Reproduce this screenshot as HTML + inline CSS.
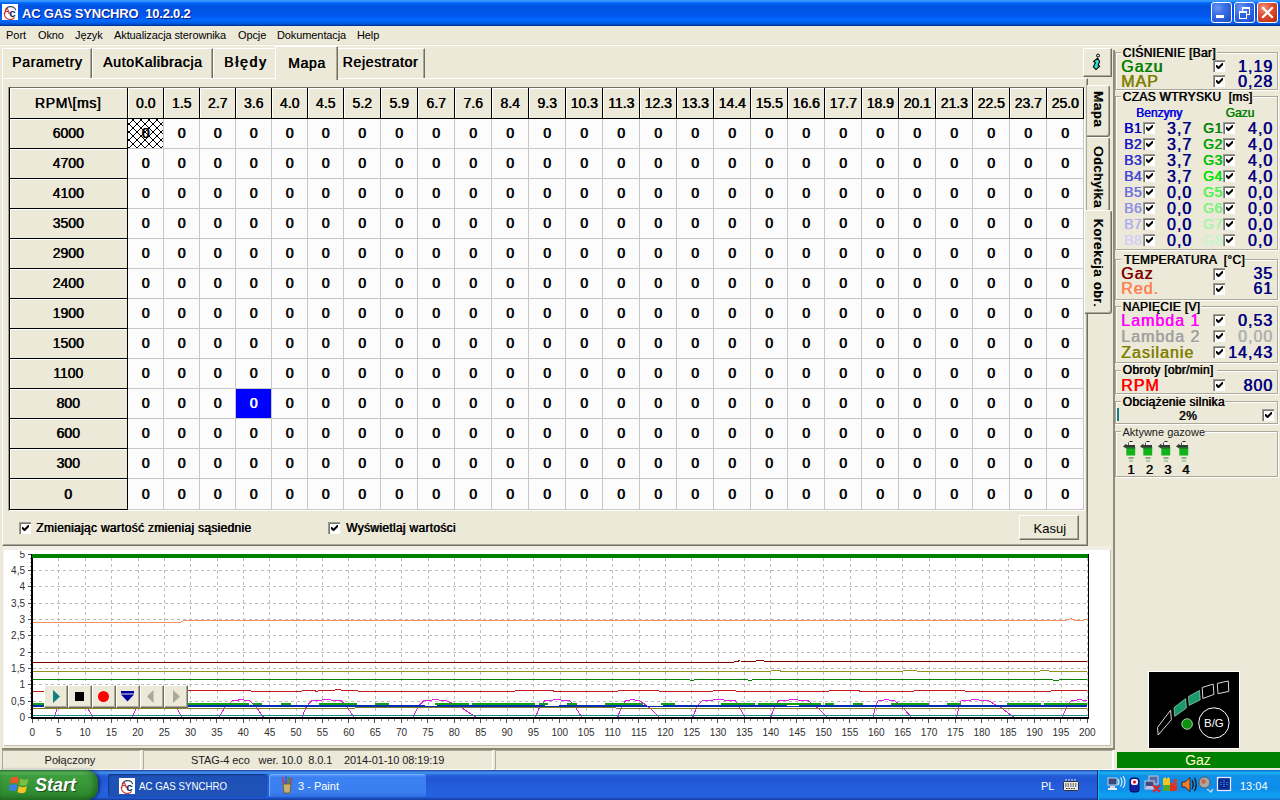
<!DOCTYPE html>
<html lang="pl"><head><meta charset="utf-8"><title>AC GAS SYNCHRO 10.2.0.2</title>
<style>
html,body{margin:0;padding:0;}
body{width:1280px;height:800px;overflow:hidden;background:#ece9d8;position:relative;font-family:"Liberation Sans",sans-serif;font-size:11px;}
.t{position:absolute;white-space:pre;margin:0;padding:0;}
.abs{position:absolute;}
.cb{position:absolute;width:11px;height:11px;background:#fff;border-top:1px solid #9a9a96;border-left:1px solid #9a9a96;box-shadow:inset 1px 1px 0 #77756c;overflow:hidden;}
.cb svg{position:absolute;left:2px;top:2px;}
.grp{position:absolute;border:1px solid #aca899;box-shadow:1px 1px 0 #fff, inset 1px 1px 0 #fff;}
.btn{position:absolute;background:#ece9d8;border:1px solid;border-color:#fff #716f64 #716f64 #fff;box-shadow:inset -1px -1px 0 #aca899;}
</style></head><body>

<div class="abs" style="left:0;top:0;width:1280px;height:26px;background:linear-gradient(to bottom,#3c98ff 0%,#3593ff 4%,#288eff 6%,#127dff 8%,#036ffc 10%,#0262ee 14%,#0057e5 20%,#0054e3 24%,#0055eb 56%,#005bf5 66%,#026afe 76%,#0062ef 86%,#0052d6 92%,#0040ab 96%,#003092 100%);"></div>
<svg class="abs" style="left:2px;top:4px" width="16" height="16" viewBox="0 0 16 16"><rect width="16" height="16" fill="#fff"/><path d="M3.2 6.6 A5.6 5.6 0 0 1 13.8 6.2" fill="none" stroke="#404a68" stroke-width="1.1"/><path d="M2.4 9.2 A5.8 5.8 0 0 0 12.6 13.4" fill="none" stroke="#d03030" stroke-width="1.1"/><text x="1.6" y="10.4" font-family="Liberation Sans,sans-serif" font-size="9.5" font-weight="bold" fill="#d02020">A</text><text x="7.2" y="13.2" font-family="Liberation Sans,sans-serif" font-size="11.5" font-weight="bold" fill="#182858">c</text></svg>
<div class="t" style="top:3.50px;font-size:13px;color:#fff;line-height:20px;font-weight:bold;letter-spacing:-0.2px;left:22px;text-shadow:1px 1px 0 #0a1883;">AC GAS SYNCHRO  10.2.0.2</div>
<div style="position:absolute;left:1211px;top:2px;width:19px;height:19px;border:1px solid #fff;border-radius:3px;background:radial-gradient(circle at 30% 25%,#6e97f2 0%,#3b6fe6 35%,#2455d6 80%,#1c48c0 100%);"><div class="abs" style="left:4px;top:12px;width:8px;height:3px;background:#fff"></div></div>
<div style="position:absolute;left:1234px;top:2px;width:19px;height:19px;border:1px solid #fff;border-radius:3px;background:radial-gradient(circle at 30% 25%,#6e97f2 0%,#3b6fe6 35%,#2455d6 80%,#1c48c0 100%);"><div class="abs" style="left:7px;top:4px;width:6px;height:5px;border:1px solid #fff;border-top-width:2px"></div><div class="abs" style="left:4px;top:8px;width:6px;height:5px;border:1px solid #fff;border-top-width:2px;background:#2f62de"></div></div>
<div style="position:absolute;left:1257px;top:2px;width:19px;height:19px;border:1px solid #fff;border-radius:3px;background:radial-gradient(circle at 30% 25%,#f0987a 0%,#e2553a 35%,#c73314 80%,#b02a10 100%);"><svg class="abs" style="left:0;top:0" width="19" height="19"><path d="M5 5 L14 14 M14 5 L5 14" stroke="#fff" stroke-width="2.2" stroke-linecap="square"/></svg></div>
<div style="position:absolute;left:0px;top:26px;width:1280px;height:18px;background:#ece9d8;"></div>
<div style="position:absolute;left:0px;top:44px;width:1280px;height:1px;background:#e6e2cf;"></div>
<div style="position:absolute;left:0px;top:45px;width:1280px;height:1px;background:#fff;"></div>
<div class="t" style="top:24.76px;font-size:11px;color:#000;line-height:20px;left:6px;">Port</div>
<div class="t" style="top:24.76px;font-size:11px;color:#000;line-height:20px;letter-spacing:-0.1px;left:38px;">Okno</div>
<div class="t" style="top:24.76px;font-size:11px;color:#000;line-height:20px;letter-spacing:-0.1px;left:75px;">Język</div>
<div class="t" style="top:24.76px;font-size:11px;color:#000;line-height:20px;letter-spacing:-0.1px;left:114px;">Aktualizacja sterownika</div>
<div class="t" style="top:24.76px;font-size:11px;color:#000;line-height:20px;letter-spacing:-0.1px;left:238px;">Opcje</div>
<div class="t" style="top:24.76px;font-size:11px;color:#000;line-height:20px;letter-spacing:-0.1px;left:277px;">Dokumentacja</div>
<div class="t" style="top:24.76px;font-size:11px;color:#000;line-height:20px;letter-spacing:-0.1px;left:357px;">Help</div>
<div style="position:absolute;left:2px;top:78px;width:1086px;height:468px;border:1px solid;border-color:#fff #716f64 #716f64 #fff;box-sizing:border-box;box-shadow:inset -1px -1px 0 #aca899;"></div>
<div style="position:absolute;left:2px;top:48px;width:90px;height:30px;background:#ece9d8;border:1px solid;border-color:#fff #716f64 transparent #fff;border-bottom:none;box-sizing:border-box;box-shadow:inset -1px 0 0 #aca899;"></div>
<div class="t" style="top:51.87px;font-size:14px;color:#000;line-height:20px;letter-spacing:0.65px;text-shadow:0.6px 0 0 #000;left:12px;">Parametry</div>
<div style="position:absolute;left:92px;top:48px;width:121px;height:30px;background:#ece9d8;border:1px solid;border-color:#fff #716f64 transparent #fff;border-bottom:none;box-sizing:border-box;box-shadow:inset -1px 0 0 #aca899;"></div>
<div class="t" style="top:51.87px;font-size:14px;color:#000;line-height:20px;letter-spacing:0.65px;text-shadow:0.6px 0 0 #000;left:103px;">AutoKalibracja</div>
<div style="position:absolute;left:213px;top:48px;width:62px;height:30px;background:#ece9d8;border:1px solid;border-color:#fff #716f64 transparent #fff;border-bottom:none;box-sizing:border-box;box-shadow:inset -1px 0 0 #aca899;border-right-color:transparent;box-shadow:none;"></div>
<div class="t" style="top:51.87px;font-size:14px;color:#000;line-height:20px;letter-spacing:1.7px;text-shadow:0.6px 0 0 #000;left:224px;">Błędy</div>
<div style="position:absolute;left:337px;top:48px;width:88px;height:30px;background:#ece9d8;border:1px solid;border-color:#fff #716f64 transparent #fff;border-bottom:none;box-sizing:border-box;box-shadow:inset -1px 0 0 #aca899;"></div>
<div class="t" style="top:51.87px;font-size:14px;color:#000;line-height:20px;letter-spacing:0.65px;text-shadow:0.6px 0 0 #000;left:342.5px;">Rejestrator</div>
<div style="position:absolute;left:275px;top:46px;width:63px;height:34px;background:#ece9d8;border:1px solid;border-color:#fff #716f64 transparent #fff;border-bottom:none;box-sizing:border-box;box-shadow:inset -1px 0 0 #aca899;"></div>
<div class="t" style="top:53.37px;font-size:14px;color:#000;line-height:20px;letter-spacing:0.65px;text-shadow:0.6px 0 0 #000;left:288px;">Mapa</div>
<div style="position:absolute;left:8px;top:87px;width:1077px;height:424px;box-sizing:border-box;border:1px solid;border-color:#716f64 #fff #fff #716f64;background:#fcfcfc;"></div>
<div style="position:absolute;left:163px;top:119px;width:1px;height:391px;background:#c8c8c8;"></div>
<div style="position:absolute;left:199px;top:119px;width:1px;height:391px;background:#c8c8c8;"></div>
<div style="position:absolute;left:235px;top:119px;width:1px;height:391px;background:#c8c8c8;"></div>
<div style="position:absolute;left:271px;top:119px;width:1px;height:391px;background:#c8c8c8;"></div>
<div style="position:absolute;left:307px;top:119px;width:1px;height:391px;background:#c8c8c8;"></div>
<div style="position:absolute;left:343px;top:119px;width:1px;height:391px;background:#c8c8c8;"></div>
<div style="position:absolute;left:380px;top:119px;width:1px;height:391px;background:#c8c8c8;"></div>
<div style="position:absolute;left:417px;top:119px;width:1px;height:391px;background:#c8c8c8;"></div>
<div style="position:absolute;left:454px;top:119px;width:1px;height:391px;background:#c8c8c8;"></div>
<div style="position:absolute;left:491px;top:119px;width:1px;height:391px;background:#c8c8c8;"></div>
<div style="position:absolute;left:528px;top:119px;width:1px;height:391px;background:#c8c8c8;"></div>
<div style="position:absolute;left:565px;top:119px;width:1px;height:391px;background:#c8c8c8;"></div>
<div style="position:absolute;left:602px;top:119px;width:1px;height:391px;background:#c8c8c8;"></div>
<div style="position:absolute;left:639px;top:119px;width:1px;height:391px;background:#c8c8c8;"></div>
<div style="position:absolute;left:676px;top:119px;width:1px;height:391px;background:#c8c8c8;"></div>
<div style="position:absolute;left:713px;top:119px;width:1px;height:391px;background:#c8c8c8;"></div>
<div style="position:absolute;left:750px;top:119px;width:1px;height:391px;background:#c8c8c8;"></div>
<div style="position:absolute;left:787px;top:119px;width:1px;height:391px;background:#c8c8c8;"></div>
<div style="position:absolute;left:824px;top:119px;width:1px;height:391px;background:#c8c8c8;"></div>
<div style="position:absolute;left:861px;top:119px;width:1px;height:391px;background:#c8c8c8;"></div>
<div style="position:absolute;left:898px;top:119px;width:1px;height:391px;background:#c8c8c8;"></div>
<div style="position:absolute;left:935px;top:119px;width:1px;height:391px;background:#c8c8c8;"></div>
<div style="position:absolute;left:972px;top:119px;width:1px;height:391px;background:#c8c8c8;"></div>
<div style="position:absolute;left:1009px;top:119px;width:1px;height:391px;background:#c8c8c8;"></div>
<div style="position:absolute;left:1046px;top:119px;width:1px;height:391px;background:#c8c8c8;"></div>
<div style="position:absolute;left:1083px;top:119px;width:1px;height:391px;background:#c8c8c8;"></div>
<div style="position:absolute;left:128px;top:148px;width:956px;height:1px;background:#c8c8c8;"></div>
<div style="position:absolute;left:128px;top:178px;width:956px;height:1px;background:#c8c8c8;"></div>
<div style="position:absolute;left:128px;top:208px;width:956px;height:1px;background:#c8c8c8;"></div>
<div style="position:absolute;left:128px;top:238px;width:956px;height:1px;background:#c8c8c8;"></div>
<div style="position:absolute;left:128px;top:268px;width:956px;height:1px;background:#c8c8c8;"></div>
<div style="position:absolute;left:128px;top:298px;width:956px;height:1px;background:#c8c8c8;"></div>
<div style="position:absolute;left:128px;top:328px;width:956px;height:1px;background:#c8c8c8;"></div>
<div style="position:absolute;left:128px;top:358px;width:956px;height:1px;background:#c8c8c8;"></div>
<div style="position:absolute;left:128px;top:388px;width:956px;height:1px;background:#c8c8c8;"></div>
<div style="position:absolute;left:128px;top:418px;width:956px;height:1px;background:#c8c8c8;"></div>
<div style="position:absolute;left:128px;top:448px;width:956px;height:1px;background:#c8c8c8;"></div>
<div style="position:absolute;left:128px;top:478px;width:956px;height:1px;background:#c8c8c8;"></div>
<div style="position:absolute;left:128px;top:509px;width:956px;height:1px;background:#c8c8c8;"></div>
<div style="position:absolute;left:9px;top:88px;width:1075px;height:31px;background:#000;"></div>
<div style="position:absolute;left:8px;top:87px;width:1px;height:424px;background:#a19d8c;"></div>
<div style="position:absolute;left:9px;top:87px;width:1px;height:423px;background:#4a483e;"></div>
<div style="position:absolute;left:9px;top:88px;width:119px;height:422px;background:#000;"></div>
<div style="position:absolute;left:10px;top:88px;width:118px;height:31px;background:#ece9d8;box-sizing:border-box;border-right:1px solid #000;border-bottom:1px solid #000;box-shadow:inset 1px 1px 0 #fff;"></div>
<div class="t" style="top:93.37px;font-size:14px;color:#000;line-height:20px;letter-spacing:0.65px;text-shadow:0.6px 0 0 #000;left:-82px;width:300px;text-align:center;">RPM\[ms]</div>
<div style="position:absolute;left:128px;top:88px;width:36px;height:31px;background:#ece9d8;box-sizing:border-box;border-right:1px solid #000;border-bottom:1px solid #000;box-shadow:inset 1px 1px 0 #fff;"></div>
<div class="t" style="top:93.37px;font-size:14px;color:#000;line-height:20px;text-shadow:0.6px 0 0 #000;left:-4.5px;width:300px;text-align:center;">0.0</div>
<div style="position:absolute;left:164px;top:88px;width:36px;height:31px;background:#ece9d8;box-sizing:border-box;border-right:1px solid #000;border-bottom:1px solid #000;box-shadow:inset 1px 1px 0 #fff;"></div>
<div class="t" style="top:93.37px;font-size:14px;color:#000;line-height:20px;text-shadow:0.6px 0 0 #000;left:31.5px;width:300px;text-align:center;">1.5</div>
<div style="position:absolute;left:200px;top:88px;width:36px;height:31px;background:#ece9d8;box-sizing:border-box;border-right:1px solid #000;border-bottom:1px solid #000;box-shadow:inset 1px 1px 0 #fff;"></div>
<div class="t" style="top:93.37px;font-size:14px;color:#000;line-height:20px;text-shadow:0.6px 0 0 #000;left:67.5px;width:300px;text-align:center;">2.7</div>
<div style="position:absolute;left:236px;top:88px;width:36px;height:31px;background:#ece9d8;box-sizing:border-box;border-right:1px solid #000;border-bottom:1px solid #000;box-shadow:inset 1px 1px 0 #fff;"></div>
<div class="t" style="top:93.37px;font-size:14px;color:#000;line-height:20px;text-shadow:0.6px 0 0 #000;left:103.5px;width:300px;text-align:center;">3.6</div>
<div style="position:absolute;left:272px;top:88px;width:36px;height:31px;background:#ece9d8;box-sizing:border-box;border-right:1px solid #000;border-bottom:1px solid #000;box-shadow:inset 1px 1px 0 #fff;"></div>
<div class="t" style="top:93.37px;font-size:14px;color:#000;line-height:20px;text-shadow:0.6px 0 0 #000;left:139.5px;width:300px;text-align:center;">4.0</div>
<div style="position:absolute;left:308px;top:88px;width:36px;height:31px;background:#ece9d8;box-sizing:border-box;border-right:1px solid #000;border-bottom:1px solid #000;box-shadow:inset 1px 1px 0 #fff;"></div>
<div class="t" style="top:93.37px;font-size:14px;color:#000;line-height:20px;text-shadow:0.6px 0 0 #000;left:175.5px;width:300px;text-align:center;">4.5</div>
<div style="position:absolute;left:344px;top:88px;width:37px;height:31px;background:#ece9d8;box-sizing:border-box;border-right:1px solid #000;border-bottom:1px solid #000;box-shadow:inset 1px 1px 0 #fff;"></div>
<div class="t" style="top:93.37px;font-size:14px;color:#000;line-height:20px;text-shadow:0.6px 0 0 #000;left:212.0px;width:300px;text-align:center;">5.2</div>
<div style="position:absolute;left:381px;top:88px;width:37px;height:31px;background:#ece9d8;box-sizing:border-box;border-right:1px solid #000;border-bottom:1px solid #000;box-shadow:inset 1px 1px 0 #fff;"></div>
<div class="t" style="top:93.37px;font-size:14px;color:#000;line-height:20px;text-shadow:0.6px 0 0 #000;left:249.0px;width:300px;text-align:center;">5.9</div>
<div style="position:absolute;left:418px;top:88px;width:37px;height:31px;background:#ece9d8;box-sizing:border-box;border-right:1px solid #000;border-bottom:1px solid #000;box-shadow:inset 1px 1px 0 #fff;"></div>
<div class="t" style="top:93.37px;font-size:14px;color:#000;line-height:20px;text-shadow:0.6px 0 0 #000;left:286.0px;width:300px;text-align:center;">6.7</div>
<div style="position:absolute;left:455px;top:88px;width:37px;height:31px;background:#ece9d8;box-sizing:border-box;border-right:1px solid #000;border-bottom:1px solid #000;box-shadow:inset 1px 1px 0 #fff;"></div>
<div class="t" style="top:93.37px;font-size:14px;color:#000;line-height:20px;text-shadow:0.6px 0 0 #000;left:323.0px;width:300px;text-align:center;">7.6</div>
<div style="position:absolute;left:492px;top:88px;width:37px;height:31px;background:#ece9d8;box-sizing:border-box;border-right:1px solid #000;border-bottom:1px solid #000;box-shadow:inset 1px 1px 0 #fff;"></div>
<div class="t" style="top:93.37px;font-size:14px;color:#000;line-height:20px;text-shadow:0.6px 0 0 #000;left:360.0px;width:300px;text-align:center;">8.4</div>
<div style="position:absolute;left:529px;top:88px;width:37px;height:31px;background:#ece9d8;box-sizing:border-box;border-right:1px solid #000;border-bottom:1px solid #000;box-shadow:inset 1px 1px 0 #fff;"></div>
<div class="t" style="top:93.37px;font-size:14px;color:#000;line-height:20px;text-shadow:0.6px 0 0 #000;left:397.0px;width:300px;text-align:center;">9.3</div>
<div style="position:absolute;left:566px;top:88px;width:37px;height:31px;background:#ece9d8;box-sizing:border-box;border-right:1px solid #000;border-bottom:1px solid #000;box-shadow:inset 1px 1px 0 #fff;"></div>
<div class="t" style="top:93.37px;font-size:14px;color:#000;line-height:20px;text-shadow:0.6px 0 0 #000;left:434.0px;width:300px;text-align:center;">10.3</div>
<div style="position:absolute;left:603px;top:88px;width:37px;height:31px;background:#ece9d8;box-sizing:border-box;border-right:1px solid #000;border-bottom:1px solid #000;box-shadow:inset 1px 1px 0 #fff;"></div>
<div class="t" style="top:93.37px;font-size:14px;color:#000;line-height:20px;text-shadow:0.6px 0 0 #000;left:471.0px;width:300px;text-align:center;">11.3</div>
<div style="position:absolute;left:640px;top:88px;width:37px;height:31px;background:#ece9d8;box-sizing:border-box;border-right:1px solid #000;border-bottom:1px solid #000;box-shadow:inset 1px 1px 0 #fff;"></div>
<div class="t" style="top:93.37px;font-size:14px;color:#000;line-height:20px;text-shadow:0.6px 0 0 #000;left:508.0px;width:300px;text-align:center;">12.3</div>
<div style="position:absolute;left:677px;top:88px;width:37px;height:31px;background:#ece9d8;box-sizing:border-box;border-right:1px solid #000;border-bottom:1px solid #000;box-shadow:inset 1px 1px 0 #fff;"></div>
<div class="t" style="top:93.37px;font-size:14px;color:#000;line-height:20px;text-shadow:0.6px 0 0 #000;left:545.0px;width:300px;text-align:center;">13.3</div>
<div style="position:absolute;left:714px;top:88px;width:37px;height:31px;background:#ece9d8;box-sizing:border-box;border-right:1px solid #000;border-bottom:1px solid #000;box-shadow:inset 1px 1px 0 #fff;"></div>
<div class="t" style="top:93.37px;font-size:14px;color:#000;line-height:20px;text-shadow:0.6px 0 0 #000;left:582.0px;width:300px;text-align:center;">14.4</div>
<div style="position:absolute;left:751px;top:88px;width:37px;height:31px;background:#ece9d8;box-sizing:border-box;border-right:1px solid #000;border-bottom:1px solid #000;box-shadow:inset 1px 1px 0 #fff;"></div>
<div class="t" style="top:93.37px;font-size:14px;color:#000;line-height:20px;text-shadow:0.6px 0 0 #000;left:619.0px;width:300px;text-align:center;">15.5</div>
<div style="position:absolute;left:788px;top:88px;width:37px;height:31px;background:#ece9d8;box-sizing:border-box;border-right:1px solid #000;border-bottom:1px solid #000;box-shadow:inset 1px 1px 0 #fff;"></div>
<div class="t" style="top:93.37px;font-size:14px;color:#000;line-height:20px;text-shadow:0.6px 0 0 #000;left:656.0px;width:300px;text-align:center;">16.6</div>
<div style="position:absolute;left:825px;top:88px;width:37px;height:31px;background:#ece9d8;box-sizing:border-box;border-right:1px solid #000;border-bottom:1px solid #000;box-shadow:inset 1px 1px 0 #fff;"></div>
<div class="t" style="top:93.37px;font-size:14px;color:#000;line-height:20px;text-shadow:0.6px 0 0 #000;left:693.0px;width:300px;text-align:center;">17.7</div>
<div style="position:absolute;left:862px;top:88px;width:37px;height:31px;background:#ece9d8;box-sizing:border-box;border-right:1px solid #000;border-bottom:1px solid #000;box-shadow:inset 1px 1px 0 #fff;"></div>
<div class="t" style="top:93.37px;font-size:14px;color:#000;line-height:20px;text-shadow:0.6px 0 0 #000;left:730.0px;width:300px;text-align:center;">18.9</div>
<div style="position:absolute;left:899px;top:88px;width:37px;height:31px;background:#ece9d8;box-sizing:border-box;border-right:1px solid #000;border-bottom:1px solid #000;box-shadow:inset 1px 1px 0 #fff;"></div>
<div class="t" style="top:93.37px;font-size:14px;color:#000;line-height:20px;text-shadow:0.6px 0 0 #000;left:767.0px;width:300px;text-align:center;">20.1</div>
<div style="position:absolute;left:936px;top:88px;width:37px;height:31px;background:#ece9d8;box-sizing:border-box;border-right:1px solid #000;border-bottom:1px solid #000;box-shadow:inset 1px 1px 0 #fff;"></div>
<div class="t" style="top:93.37px;font-size:14px;color:#000;line-height:20px;text-shadow:0.6px 0 0 #000;left:804.0px;width:300px;text-align:center;">21.3</div>
<div style="position:absolute;left:973px;top:88px;width:37px;height:31px;background:#ece9d8;box-sizing:border-box;border-right:1px solid #000;border-bottom:1px solid #000;box-shadow:inset 1px 1px 0 #fff;"></div>
<div class="t" style="top:93.37px;font-size:14px;color:#000;line-height:20px;text-shadow:0.6px 0 0 #000;left:841.0px;width:300px;text-align:center;">22.5</div>
<div style="position:absolute;left:1010px;top:88px;width:37px;height:31px;background:#ece9d8;box-sizing:border-box;border-right:1px solid #000;border-bottom:1px solid #000;box-shadow:inset 1px 1px 0 #fff;"></div>
<div class="t" style="top:93.37px;font-size:14px;color:#000;line-height:20px;text-shadow:0.6px 0 0 #000;left:878.0px;width:300px;text-align:center;">23.7</div>
<div style="position:absolute;left:1047px;top:88px;width:37px;height:31px;background:#ece9d8;box-sizing:border-box;border-right:1px solid #000;border-bottom:1px solid #000;box-shadow:inset 1px 1px 0 #fff;"></div>
<div class="t" style="top:93.37px;font-size:14px;color:#000;line-height:20px;text-shadow:0.6px 0 0 #000;left:915.0px;width:300px;text-align:center;">25.0</div>
<div style="position:absolute;left:10px;top:119px;width:118px;height:30px;background:#ece9d8;box-sizing:border-box;border-right:1px solid #000;border-bottom:1px solid #000;box-shadow:inset 1px 1px 0 #fff;"></div>
<div class="t" style="top:123.37px;font-size:14px;color:#000;line-height:20px;text-shadow:0.6px 0 0 #000;left:-82px;width:300px;text-align:center;">6000</div>
<svg class="abs" style="left:128px;top:119px" width="35" height="29"><defs><pattern id="hx" x="1" y="5" width="8" height="8" patternUnits="userSpaceOnUse"><path d="M0 0 L8 8 M8 0 L0 8" stroke="#000" stroke-width="1"/></pattern></defs><rect width="100%" height="100%" fill="#fff"/><rect width="100%" height="100%" fill="url(#hx)"/></svg>
<div class="t" style="top:123.37px;font-size:14px;color:#000;line-height:20px;text-shadow:0.6px 0 0 #000;left:-4.5px;width:300px;text-align:center;">0</div>
<div class="t" style="top:123.37px;font-size:14px;color:#000;line-height:20px;text-shadow:0.6px 0 0 #000;left:31.5px;width:300px;text-align:center;">0</div>
<div class="t" style="top:123.37px;font-size:14px;color:#000;line-height:20px;text-shadow:0.6px 0 0 #000;left:67.5px;width:300px;text-align:center;">0</div>
<div class="t" style="top:123.37px;font-size:14px;color:#000;line-height:20px;text-shadow:0.6px 0 0 #000;left:103.5px;width:300px;text-align:center;">0</div>
<div class="t" style="top:123.37px;font-size:14px;color:#000;line-height:20px;text-shadow:0.6px 0 0 #000;left:139.5px;width:300px;text-align:center;">0</div>
<div class="t" style="top:123.37px;font-size:14px;color:#000;line-height:20px;text-shadow:0.6px 0 0 #000;left:175.5px;width:300px;text-align:center;">0</div>
<div class="t" style="top:123.37px;font-size:14px;color:#000;line-height:20px;text-shadow:0.6px 0 0 #000;left:212.0px;width:300px;text-align:center;">0</div>
<div class="t" style="top:123.37px;font-size:14px;color:#000;line-height:20px;text-shadow:0.6px 0 0 #000;left:249.0px;width:300px;text-align:center;">0</div>
<div class="t" style="top:123.37px;font-size:14px;color:#000;line-height:20px;text-shadow:0.6px 0 0 #000;left:286.0px;width:300px;text-align:center;">0</div>
<div class="t" style="top:123.37px;font-size:14px;color:#000;line-height:20px;text-shadow:0.6px 0 0 #000;left:323.0px;width:300px;text-align:center;">0</div>
<div class="t" style="top:123.37px;font-size:14px;color:#000;line-height:20px;text-shadow:0.6px 0 0 #000;left:360.0px;width:300px;text-align:center;">0</div>
<div class="t" style="top:123.37px;font-size:14px;color:#000;line-height:20px;text-shadow:0.6px 0 0 #000;left:397.0px;width:300px;text-align:center;">0</div>
<div class="t" style="top:123.37px;font-size:14px;color:#000;line-height:20px;text-shadow:0.6px 0 0 #000;left:434.0px;width:300px;text-align:center;">0</div>
<div class="t" style="top:123.37px;font-size:14px;color:#000;line-height:20px;text-shadow:0.6px 0 0 #000;left:471.0px;width:300px;text-align:center;">0</div>
<div class="t" style="top:123.37px;font-size:14px;color:#000;line-height:20px;text-shadow:0.6px 0 0 #000;left:508.0px;width:300px;text-align:center;">0</div>
<div class="t" style="top:123.37px;font-size:14px;color:#000;line-height:20px;text-shadow:0.6px 0 0 #000;left:545.0px;width:300px;text-align:center;">0</div>
<div class="t" style="top:123.37px;font-size:14px;color:#000;line-height:20px;text-shadow:0.6px 0 0 #000;left:582.0px;width:300px;text-align:center;">0</div>
<div class="t" style="top:123.37px;font-size:14px;color:#000;line-height:20px;text-shadow:0.6px 0 0 #000;left:619.0px;width:300px;text-align:center;">0</div>
<div class="t" style="top:123.37px;font-size:14px;color:#000;line-height:20px;text-shadow:0.6px 0 0 #000;left:656.0px;width:300px;text-align:center;">0</div>
<div class="t" style="top:123.37px;font-size:14px;color:#000;line-height:20px;text-shadow:0.6px 0 0 #000;left:693.0px;width:300px;text-align:center;">0</div>
<div class="t" style="top:123.37px;font-size:14px;color:#000;line-height:20px;text-shadow:0.6px 0 0 #000;left:730.0px;width:300px;text-align:center;">0</div>
<div class="t" style="top:123.37px;font-size:14px;color:#000;line-height:20px;text-shadow:0.6px 0 0 #000;left:767.0px;width:300px;text-align:center;">0</div>
<div class="t" style="top:123.37px;font-size:14px;color:#000;line-height:20px;text-shadow:0.6px 0 0 #000;left:804.0px;width:300px;text-align:center;">0</div>
<div class="t" style="top:123.37px;font-size:14px;color:#000;line-height:20px;text-shadow:0.6px 0 0 #000;left:841.0px;width:300px;text-align:center;">0</div>
<div class="t" style="top:123.37px;font-size:14px;color:#000;line-height:20px;text-shadow:0.6px 0 0 #000;left:878.0px;width:300px;text-align:center;">0</div>
<div class="t" style="top:123.37px;font-size:14px;color:#000;line-height:20px;text-shadow:0.6px 0 0 #000;left:915.0px;width:300px;text-align:center;">0</div>
<div style="position:absolute;left:10px;top:149px;width:118px;height:30px;background:#ece9d8;box-sizing:border-box;border-right:1px solid #000;border-bottom:1px solid #000;box-shadow:inset 1px 1px 0 #fff;"></div>
<div class="t" style="top:153.37px;font-size:14px;color:#000;line-height:20px;text-shadow:0.6px 0 0 #000;left:-82px;width:300px;text-align:center;">4700</div>
<div class="t" style="top:153.37px;font-size:14px;color:#000;line-height:20px;text-shadow:0.6px 0 0 #000;left:-4.5px;width:300px;text-align:center;">0</div>
<div class="t" style="top:153.37px;font-size:14px;color:#000;line-height:20px;text-shadow:0.6px 0 0 #000;left:31.5px;width:300px;text-align:center;">0</div>
<div class="t" style="top:153.37px;font-size:14px;color:#000;line-height:20px;text-shadow:0.6px 0 0 #000;left:67.5px;width:300px;text-align:center;">0</div>
<div class="t" style="top:153.37px;font-size:14px;color:#000;line-height:20px;text-shadow:0.6px 0 0 #000;left:103.5px;width:300px;text-align:center;">0</div>
<div class="t" style="top:153.37px;font-size:14px;color:#000;line-height:20px;text-shadow:0.6px 0 0 #000;left:139.5px;width:300px;text-align:center;">0</div>
<div class="t" style="top:153.37px;font-size:14px;color:#000;line-height:20px;text-shadow:0.6px 0 0 #000;left:175.5px;width:300px;text-align:center;">0</div>
<div class="t" style="top:153.37px;font-size:14px;color:#000;line-height:20px;text-shadow:0.6px 0 0 #000;left:212.0px;width:300px;text-align:center;">0</div>
<div class="t" style="top:153.37px;font-size:14px;color:#000;line-height:20px;text-shadow:0.6px 0 0 #000;left:249.0px;width:300px;text-align:center;">0</div>
<div class="t" style="top:153.37px;font-size:14px;color:#000;line-height:20px;text-shadow:0.6px 0 0 #000;left:286.0px;width:300px;text-align:center;">0</div>
<div class="t" style="top:153.37px;font-size:14px;color:#000;line-height:20px;text-shadow:0.6px 0 0 #000;left:323.0px;width:300px;text-align:center;">0</div>
<div class="t" style="top:153.37px;font-size:14px;color:#000;line-height:20px;text-shadow:0.6px 0 0 #000;left:360.0px;width:300px;text-align:center;">0</div>
<div class="t" style="top:153.37px;font-size:14px;color:#000;line-height:20px;text-shadow:0.6px 0 0 #000;left:397.0px;width:300px;text-align:center;">0</div>
<div class="t" style="top:153.37px;font-size:14px;color:#000;line-height:20px;text-shadow:0.6px 0 0 #000;left:434.0px;width:300px;text-align:center;">0</div>
<div class="t" style="top:153.37px;font-size:14px;color:#000;line-height:20px;text-shadow:0.6px 0 0 #000;left:471.0px;width:300px;text-align:center;">0</div>
<div class="t" style="top:153.37px;font-size:14px;color:#000;line-height:20px;text-shadow:0.6px 0 0 #000;left:508.0px;width:300px;text-align:center;">0</div>
<div class="t" style="top:153.37px;font-size:14px;color:#000;line-height:20px;text-shadow:0.6px 0 0 #000;left:545.0px;width:300px;text-align:center;">0</div>
<div class="t" style="top:153.37px;font-size:14px;color:#000;line-height:20px;text-shadow:0.6px 0 0 #000;left:582.0px;width:300px;text-align:center;">0</div>
<div class="t" style="top:153.37px;font-size:14px;color:#000;line-height:20px;text-shadow:0.6px 0 0 #000;left:619.0px;width:300px;text-align:center;">0</div>
<div class="t" style="top:153.37px;font-size:14px;color:#000;line-height:20px;text-shadow:0.6px 0 0 #000;left:656.0px;width:300px;text-align:center;">0</div>
<div class="t" style="top:153.37px;font-size:14px;color:#000;line-height:20px;text-shadow:0.6px 0 0 #000;left:693.0px;width:300px;text-align:center;">0</div>
<div class="t" style="top:153.37px;font-size:14px;color:#000;line-height:20px;text-shadow:0.6px 0 0 #000;left:730.0px;width:300px;text-align:center;">0</div>
<div class="t" style="top:153.37px;font-size:14px;color:#000;line-height:20px;text-shadow:0.6px 0 0 #000;left:767.0px;width:300px;text-align:center;">0</div>
<div class="t" style="top:153.37px;font-size:14px;color:#000;line-height:20px;text-shadow:0.6px 0 0 #000;left:804.0px;width:300px;text-align:center;">0</div>
<div class="t" style="top:153.37px;font-size:14px;color:#000;line-height:20px;text-shadow:0.6px 0 0 #000;left:841.0px;width:300px;text-align:center;">0</div>
<div class="t" style="top:153.37px;font-size:14px;color:#000;line-height:20px;text-shadow:0.6px 0 0 #000;left:878.0px;width:300px;text-align:center;">0</div>
<div class="t" style="top:153.37px;font-size:14px;color:#000;line-height:20px;text-shadow:0.6px 0 0 #000;left:915.0px;width:300px;text-align:center;">0</div>
<div style="position:absolute;left:10px;top:179px;width:118px;height:30px;background:#ece9d8;box-sizing:border-box;border-right:1px solid #000;border-bottom:1px solid #000;box-shadow:inset 1px 1px 0 #fff;"></div>
<div class="t" style="top:183.37px;font-size:14px;color:#000;line-height:20px;text-shadow:0.6px 0 0 #000;left:-82px;width:300px;text-align:center;">4100</div>
<div class="t" style="top:183.37px;font-size:14px;color:#000;line-height:20px;text-shadow:0.6px 0 0 #000;left:-4.5px;width:300px;text-align:center;">0</div>
<div class="t" style="top:183.37px;font-size:14px;color:#000;line-height:20px;text-shadow:0.6px 0 0 #000;left:31.5px;width:300px;text-align:center;">0</div>
<div class="t" style="top:183.37px;font-size:14px;color:#000;line-height:20px;text-shadow:0.6px 0 0 #000;left:67.5px;width:300px;text-align:center;">0</div>
<div class="t" style="top:183.37px;font-size:14px;color:#000;line-height:20px;text-shadow:0.6px 0 0 #000;left:103.5px;width:300px;text-align:center;">0</div>
<div class="t" style="top:183.37px;font-size:14px;color:#000;line-height:20px;text-shadow:0.6px 0 0 #000;left:139.5px;width:300px;text-align:center;">0</div>
<div class="t" style="top:183.37px;font-size:14px;color:#000;line-height:20px;text-shadow:0.6px 0 0 #000;left:175.5px;width:300px;text-align:center;">0</div>
<div class="t" style="top:183.37px;font-size:14px;color:#000;line-height:20px;text-shadow:0.6px 0 0 #000;left:212.0px;width:300px;text-align:center;">0</div>
<div class="t" style="top:183.37px;font-size:14px;color:#000;line-height:20px;text-shadow:0.6px 0 0 #000;left:249.0px;width:300px;text-align:center;">0</div>
<div class="t" style="top:183.37px;font-size:14px;color:#000;line-height:20px;text-shadow:0.6px 0 0 #000;left:286.0px;width:300px;text-align:center;">0</div>
<div class="t" style="top:183.37px;font-size:14px;color:#000;line-height:20px;text-shadow:0.6px 0 0 #000;left:323.0px;width:300px;text-align:center;">0</div>
<div class="t" style="top:183.37px;font-size:14px;color:#000;line-height:20px;text-shadow:0.6px 0 0 #000;left:360.0px;width:300px;text-align:center;">0</div>
<div class="t" style="top:183.37px;font-size:14px;color:#000;line-height:20px;text-shadow:0.6px 0 0 #000;left:397.0px;width:300px;text-align:center;">0</div>
<div class="t" style="top:183.37px;font-size:14px;color:#000;line-height:20px;text-shadow:0.6px 0 0 #000;left:434.0px;width:300px;text-align:center;">0</div>
<div class="t" style="top:183.37px;font-size:14px;color:#000;line-height:20px;text-shadow:0.6px 0 0 #000;left:471.0px;width:300px;text-align:center;">0</div>
<div class="t" style="top:183.37px;font-size:14px;color:#000;line-height:20px;text-shadow:0.6px 0 0 #000;left:508.0px;width:300px;text-align:center;">0</div>
<div class="t" style="top:183.37px;font-size:14px;color:#000;line-height:20px;text-shadow:0.6px 0 0 #000;left:545.0px;width:300px;text-align:center;">0</div>
<div class="t" style="top:183.37px;font-size:14px;color:#000;line-height:20px;text-shadow:0.6px 0 0 #000;left:582.0px;width:300px;text-align:center;">0</div>
<div class="t" style="top:183.37px;font-size:14px;color:#000;line-height:20px;text-shadow:0.6px 0 0 #000;left:619.0px;width:300px;text-align:center;">0</div>
<div class="t" style="top:183.37px;font-size:14px;color:#000;line-height:20px;text-shadow:0.6px 0 0 #000;left:656.0px;width:300px;text-align:center;">0</div>
<div class="t" style="top:183.37px;font-size:14px;color:#000;line-height:20px;text-shadow:0.6px 0 0 #000;left:693.0px;width:300px;text-align:center;">0</div>
<div class="t" style="top:183.37px;font-size:14px;color:#000;line-height:20px;text-shadow:0.6px 0 0 #000;left:730.0px;width:300px;text-align:center;">0</div>
<div class="t" style="top:183.37px;font-size:14px;color:#000;line-height:20px;text-shadow:0.6px 0 0 #000;left:767.0px;width:300px;text-align:center;">0</div>
<div class="t" style="top:183.37px;font-size:14px;color:#000;line-height:20px;text-shadow:0.6px 0 0 #000;left:804.0px;width:300px;text-align:center;">0</div>
<div class="t" style="top:183.37px;font-size:14px;color:#000;line-height:20px;text-shadow:0.6px 0 0 #000;left:841.0px;width:300px;text-align:center;">0</div>
<div class="t" style="top:183.37px;font-size:14px;color:#000;line-height:20px;text-shadow:0.6px 0 0 #000;left:878.0px;width:300px;text-align:center;">0</div>
<div class="t" style="top:183.37px;font-size:14px;color:#000;line-height:20px;text-shadow:0.6px 0 0 #000;left:915.0px;width:300px;text-align:center;">0</div>
<div style="position:absolute;left:10px;top:209px;width:118px;height:30px;background:#ece9d8;box-sizing:border-box;border-right:1px solid #000;border-bottom:1px solid #000;box-shadow:inset 1px 1px 0 #fff;"></div>
<div class="t" style="top:213.37px;font-size:14px;color:#000;line-height:20px;text-shadow:0.6px 0 0 #000;left:-82px;width:300px;text-align:center;">3500</div>
<div class="t" style="top:213.37px;font-size:14px;color:#000;line-height:20px;text-shadow:0.6px 0 0 #000;left:-4.5px;width:300px;text-align:center;">0</div>
<div class="t" style="top:213.37px;font-size:14px;color:#000;line-height:20px;text-shadow:0.6px 0 0 #000;left:31.5px;width:300px;text-align:center;">0</div>
<div class="t" style="top:213.37px;font-size:14px;color:#000;line-height:20px;text-shadow:0.6px 0 0 #000;left:67.5px;width:300px;text-align:center;">0</div>
<div class="t" style="top:213.37px;font-size:14px;color:#000;line-height:20px;text-shadow:0.6px 0 0 #000;left:103.5px;width:300px;text-align:center;">0</div>
<div class="t" style="top:213.37px;font-size:14px;color:#000;line-height:20px;text-shadow:0.6px 0 0 #000;left:139.5px;width:300px;text-align:center;">0</div>
<div class="t" style="top:213.37px;font-size:14px;color:#000;line-height:20px;text-shadow:0.6px 0 0 #000;left:175.5px;width:300px;text-align:center;">0</div>
<div class="t" style="top:213.37px;font-size:14px;color:#000;line-height:20px;text-shadow:0.6px 0 0 #000;left:212.0px;width:300px;text-align:center;">0</div>
<div class="t" style="top:213.37px;font-size:14px;color:#000;line-height:20px;text-shadow:0.6px 0 0 #000;left:249.0px;width:300px;text-align:center;">0</div>
<div class="t" style="top:213.37px;font-size:14px;color:#000;line-height:20px;text-shadow:0.6px 0 0 #000;left:286.0px;width:300px;text-align:center;">0</div>
<div class="t" style="top:213.37px;font-size:14px;color:#000;line-height:20px;text-shadow:0.6px 0 0 #000;left:323.0px;width:300px;text-align:center;">0</div>
<div class="t" style="top:213.37px;font-size:14px;color:#000;line-height:20px;text-shadow:0.6px 0 0 #000;left:360.0px;width:300px;text-align:center;">0</div>
<div class="t" style="top:213.37px;font-size:14px;color:#000;line-height:20px;text-shadow:0.6px 0 0 #000;left:397.0px;width:300px;text-align:center;">0</div>
<div class="t" style="top:213.37px;font-size:14px;color:#000;line-height:20px;text-shadow:0.6px 0 0 #000;left:434.0px;width:300px;text-align:center;">0</div>
<div class="t" style="top:213.37px;font-size:14px;color:#000;line-height:20px;text-shadow:0.6px 0 0 #000;left:471.0px;width:300px;text-align:center;">0</div>
<div class="t" style="top:213.37px;font-size:14px;color:#000;line-height:20px;text-shadow:0.6px 0 0 #000;left:508.0px;width:300px;text-align:center;">0</div>
<div class="t" style="top:213.37px;font-size:14px;color:#000;line-height:20px;text-shadow:0.6px 0 0 #000;left:545.0px;width:300px;text-align:center;">0</div>
<div class="t" style="top:213.37px;font-size:14px;color:#000;line-height:20px;text-shadow:0.6px 0 0 #000;left:582.0px;width:300px;text-align:center;">0</div>
<div class="t" style="top:213.37px;font-size:14px;color:#000;line-height:20px;text-shadow:0.6px 0 0 #000;left:619.0px;width:300px;text-align:center;">0</div>
<div class="t" style="top:213.37px;font-size:14px;color:#000;line-height:20px;text-shadow:0.6px 0 0 #000;left:656.0px;width:300px;text-align:center;">0</div>
<div class="t" style="top:213.37px;font-size:14px;color:#000;line-height:20px;text-shadow:0.6px 0 0 #000;left:693.0px;width:300px;text-align:center;">0</div>
<div class="t" style="top:213.37px;font-size:14px;color:#000;line-height:20px;text-shadow:0.6px 0 0 #000;left:730.0px;width:300px;text-align:center;">0</div>
<div class="t" style="top:213.37px;font-size:14px;color:#000;line-height:20px;text-shadow:0.6px 0 0 #000;left:767.0px;width:300px;text-align:center;">0</div>
<div class="t" style="top:213.37px;font-size:14px;color:#000;line-height:20px;text-shadow:0.6px 0 0 #000;left:804.0px;width:300px;text-align:center;">0</div>
<div class="t" style="top:213.37px;font-size:14px;color:#000;line-height:20px;text-shadow:0.6px 0 0 #000;left:841.0px;width:300px;text-align:center;">0</div>
<div class="t" style="top:213.37px;font-size:14px;color:#000;line-height:20px;text-shadow:0.6px 0 0 #000;left:878.0px;width:300px;text-align:center;">0</div>
<div class="t" style="top:213.37px;font-size:14px;color:#000;line-height:20px;text-shadow:0.6px 0 0 #000;left:915.0px;width:300px;text-align:center;">0</div>
<div style="position:absolute;left:10px;top:239px;width:118px;height:30px;background:#ece9d8;box-sizing:border-box;border-right:1px solid #000;border-bottom:1px solid #000;box-shadow:inset 1px 1px 0 #fff;"></div>
<div class="t" style="top:243.37px;font-size:14px;color:#000;line-height:20px;text-shadow:0.6px 0 0 #000;left:-82px;width:300px;text-align:center;">2900</div>
<div class="t" style="top:243.37px;font-size:14px;color:#000;line-height:20px;text-shadow:0.6px 0 0 #000;left:-4.5px;width:300px;text-align:center;">0</div>
<div class="t" style="top:243.37px;font-size:14px;color:#000;line-height:20px;text-shadow:0.6px 0 0 #000;left:31.5px;width:300px;text-align:center;">0</div>
<div class="t" style="top:243.37px;font-size:14px;color:#000;line-height:20px;text-shadow:0.6px 0 0 #000;left:67.5px;width:300px;text-align:center;">0</div>
<div class="t" style="top:243.37px;font-size:14px;color:#000;line-height:20px;text-shadow:0.6px 0 0 #000;left:103.5px;width:300px;text-align:center;">0</div>
<div class="t" style="top:243.37px;font-size:14px;color:#000;line-height:20px;text-shadow:0.6px 0 0 #000;left:139.5px;width:300px;text-align:center;">0</div>
<div class="t" style="top:243.37px;font-size:14px;color:#000;line-height:20px;text-shadow:0.6px 0 0 #000;left:175.5px;width:300px;text-align:center;">0</div>
<div class="t" style="top:243.37px;font-size:14px;color:#000;line-height:20px;text-shadow:0.6px 0 0 #000;left:212.0px;width:300px;text-align:center;">0</div>
<div class="t" style="top:243.37px;font-size:14px;color:#000;line-height:20px;text-shadow:0.6px 0 0 #000;left:249.0px;width:300px;text-align:center;">0</div>
<div class="t" style="top:243.37px;font-size:14px;color:#000;line-height:20px;text-shadow:0.6px 0 0 #000;left:286.0px;width:300px;text-align:center;">0</div>
<div class="t" style="top:243.37px;font-size:14px;color:#000;line-height:20px;text-shadow:0.6px 0 0 #000;left:323.0px;width:300px;text-align:center;">0</div>
<div class="t" style="top:243.37px;font-size:14px;color:#000;line-height:20px;text-shadow:0.6px 0 0 #000;left:360.0px;width:300px;text-align:center;">0</div>
<div class="t" style="top:243.37px;font-size:14px;color:#000;line-height:20px;text-shadow:0.6px 0 0 #000;left:397.0px;width:300px;text-align:center;">0</div>
<div class="t" style="top:243.37px;font-size:14px;color:#000;line-height:20px;text-shadow:0.6px 0 0 #000;left:434.0px;width:300px;text-align:center;">0</div>
<div class="t" style="top:243.37px;font-size:14px;color:#000;line-height:20px;text-shadow:0.6px 0 0 #000;left:471.0px;width:300px;text-align:center;">0</div>
<div class="t" style="top:243.37px;font-size:14px;color:#000;line-height:20px;text-shadow:0.6px 0 0 #000;left:508.0px;width:300px;text-align:center;">0</div>
<div class="t" style="top:243.37px;font-size:14px;color:#000;line-height:20px;text-shadow:0.6px 0 0 #000;left:545.0px;width:300px;text-align:center;">0</div>
<div class="t" style="top:243.37px;font-size:14px;color:#000;line-height:20px;text-shadow:0.6px 0 0 #000;left:582.0px;width:300px;text-align:center;">0</div>
<div class="t" style="top:243.37px;font-size:14px;color:#000;line-height:20px;text-shadow:0.6px 0 0 #000;left:619.0px;width:300px;text-align:center;">0</div>
<div class="t" style="top:243.37px;font-size:14px;color:#000;line-height:20px;text-shadow:0.6px 0 0 #000;left:656.0px;width:300px;text-align:center;">0</div>
<div class="t" style="top:243.37px;font-size:14px;color:#000;line-height:20px;text-shadow:0.6px 0 0 #000;left:693.0px;width:300px;text-align:center;">0</div>
<div class="t" style="top:243.37px;font-size:14px;color:#000;line-height:20px;text-shadow:0.6px 0 0 #000;left:730.0px;width:300px;text-align:center;">0</div>
<div class="t" style="top:243.37px;font-size:14px;color:#000;line-height:20px;text-shadow:0.6px 0 0 #000;left:767.0px;width:300px;text-align:center;">0</div>
<div class="t" style="top:243.37px;font-size:14px;color:#000;line-height:20px;text-shadow:0.6px 0 0 #000;left:804.0px;width:300px;text-align:center;">0</div>
<div class="t" style="top:243.37px;font-size:14px;color:#000;line-height:20px;text-shadow:0.6px 0 0 #000;left:841.0px;width:300px;text-align:center;">0</div>
<div class="t" style="top:243.37px;font-size:14px;color:#000;line-height:20px;text-shadow:0.6px 0 0 #000;left:878.0px;width:300px;text-align:center;">0</div>
<div class="t" style="top:243.37px;font-size:14px;color:#000;line-height:20px;text-shadow:0.6px 0 0 #000;left:915.0px;width:300px;text-align:center;">0</div>
<div style="position:absolute;left:10px;top:269px;width:118px;height:30px;background:#ece9d8;box-sizing:border-box;border-right:1px solid #000;border-bottom:1px solid #000;box-shadow:inset 1px 1px 0 #fff;"></div>
<div class="t" style="top:273.37px;font-size:14px;color:#000;line-height:20px;text-shadow:0.6px 0 0 #000;left:-82px;width:300px;text-align:center;">2400</div>
<div class="t" style="top:273.37px;font-size:14px;color:#000;line-height:20px;text-shadow:0.6px 0 0 #000;left:-4.5px;width:300px;text-align:center;">0</div>
<div class="t" style="top:273.37px;font-size:14px;color:#000;line-height:20px;text-shadow:0.6px 0 0 #000;left:31.5px;width:300px;text-align:center;">0</div>
<div class="t" style="top:273.37px;font-size:14px;color:#000;line-height:20px;text-shadow:0.6px 0 0 #000;left:67.5px;width:300px;text-align:center;">0</div>
<div class="t" style="top:273.37px;font-size:14px;color:#000;line-height:20px;text-shadow:0.6px 0 0 #000;left:103.5px;width:300px;text-align:center;">0</div>
<div class="t" style="top:273.37px;font-size:14px;color:#000;line-height:20px;text-shadow:0.6px 0 0 #000;left:139.5px;width:300px;text-align:center;">0</div>
<div class="t" style="top:273.37px;font-size:14px;color:#000;line-height:20px;text-shadow:0.6px 0 0 #000;left:175.5px;width:300px;text-align:center;">0</div>
<div class="t" style="top:273.37px;font-size:14px;color:#000;line-height:20px;text-shadow:0.6px 0 0 #000;left:212.0px;width:300px;text-align:center;">0</div>
<div class="t" style="top:273.37px;font-size:14px;color:#000;line-height:20px;text-shadow:0.6px 0 0 #000;left:249.0px;width:300px;text-align:center;">0</div>
<div class="t" style="top:273.37px;font-size:14px;color:#000;line-height:20px;text-shadow:0.6px 0 0 #000;left:286.0px;width:300px;text-align:center;">0</div>
<div class="t" style="top:273.37px;font-size:14px;color:#000;line-height:20px;text-shadow:0.6px 0 0 #000;left:323.0px;width:300px;text-align:center;">0</div>
<div class="t" style="top:273.37px;font-size:14px;color:#000;line-height:20px;text-shadow:0.6px 0 0 #000;left:360.0px;width:300px;text-align:center;">0</div>
<div class="t" style="top:273.37px;font-size:14px;color:#000;line-height:20px;text-shadow:0.6px 0 0 #000;left:397.0px;width:300px;text-align:center;">0</div>
<div class="t" style="top:273.37px;font-size:14px;color:#000;line-height:20px;text-shadow:0.6px 0 0 #000;left:434.0px;width:300px;text-align:center;">0</div>
<div class="t" style="top:273.37px;font-size:14px;color:#000;line-height:20px;text-shadow:0.6px 0 0 #000;left:471.0px;width:300px;text-align:center;">0</div>
<div class="t" style="top:273.37px;font-size:14px;color:#000;line-height:20px;text-shadow:0.6px 0 0 #000;left:508.0px;width:300px;text-align:center;">0</div>
<div class="t" style="top:273.37px;font-size:14px;color:#000;line-height:20px;text-shadow:0.6px 0 0 #000;left:545.0px;width:300px;text-align:center;">0</div>
<div class="t" style="top:273.37px;font-size:14px;color:#000;line-height:20px;text-shadow:0.6px 0 0 #000;left:582.0px;width:300px;text-align:center;">0</div>
<div class="t" style="top:273.37px;font-size:14px;color:#000;line-height:20px;text-shadow:0.6px 0 0 #000;left:619.0px;width:300px;text-align:center;">0</div>
<div class="t" style="top:273.37px;font-size:14px;color:#000;line-height:20px;text-shadow:0.6px 0 0 #000;left:656.0px;width:300px;text-align:center;">0</div>
<div class="t" style="top:273.37px;font-size:14px;color:#000;line-height:20px;text-shadow:0.6px 0 0 #000;left:693.0px;width:300px;text-align:center;">0</div>
<div class="t" style="top:273.37px;font-size:14px;color:#000;line-height:20px;text-shadow:0.6px 0 0 #000;left:730.0px;width:300px;text-align:center;">0</div>
<div class="t" style="top:273.37px;font-size:14px;color:#000;line-height:20px;text-shadow:0.6px 0 0 #000;left:767.0px;width:300px;text-align:center;">0</div>
<div class="t" style="top:273.37px;font-size:14px;color:#000;line-height:20px;text-shadow:0.6px 0 0 #000;left:804.0px;width:300px;text-align:center;">0</div>
<div class="t" style="top:273.37px;font-size:14px;color:#000;line-height:20px;text-shadow:0.6px 0 0 #000;left:841.0px;width:300px;text-align:center;">0</div>
<div class="t" style="top:273.37px;font-size:14px;color:#000;line-height:20px;text-shadow:0.6px 0 0 #000;left:878.0px;width:300px;text-align:center;">0</div>
<div class="t" style="top:273.37px;font-size:14px;color:#000;line-height:20px;text-shadow:0.6px 0 0 #000;left:915.0px;width:300px;text-align:center;">0</div>
<div style="position:absolute;left:10px;top:299px;width:118px;height:30px;background:#ece9d8;box-sizing:border-box;border-right:1px solid #000;border-bottom:1px solid #000;box-shadow:inset 1px 1px 0 #fff;"></div>
<div class="t" style="top:303.37px;font-size:14px;color:#000;line-height:20px;text-shadow:0.6px 0 0 #000;left:-82px;width:300px;text-align:center;">1900</div>
<div class="t" style="top:303.37px;font-size:14px;color:#000;line-height:20px;text-shadow:0.6px 0 0 #000;left:-4.5px;width:300px;text-align:center;">0</div>
<div class="t" style="top:303.37px;font-size:14px;color:#000;line-height:20px;text-shadow:0.6px 0 0 #000;left:31.5px;width:300px;text-align:center;">0</div>
<div class="t" style="top:303.37px;font-size:14px;color:#000;line-height:20px;text-shadow:0.6px 0 0 #000;left:67.5px;width:300px;text-align:center;">0</div>
<div class="t" style="top:303.37px;font-size:14px;color:#000;line-height:20px;text-shadow:0.6px 0 0 #000;left:103.5px;width:300px;text-align:center;">0</div>
<div class="t" style="top:303.37px;font-size:14px;color:#000;line-height:20px;text-shadow:0.6px 0 0 #000;left:139.5px;width:300px;text-align:center;">0</div>
<div class="t" style="top:303.37px;font-size:14px;color:#000;line-height:20px;text-shadow:0.6px 0 0 #000;left:175.5px;width:300px;text-align:center;">0</div>
<div class="t" style="top:303.37px;font-size:14px;color:#000;line-height:20px;text-shadow:0.6px 0 0 #000;left:212.0px;width:300px;text-align:center;">0</div>
<div class="t" style="top:303.37px;font-size:14px;color:#000;line-height:20px;text-shadow:0.6px 0 0 #000;left:249.0px;width:300px;text-align:center;">0</div>
<div class="t" style="top:303.37px;font-size:14px;color:#000;line-height:20px;text-shadow:0.6px 0 0 #000;left:286.0px;width:300px;text-align:center;">0</div>
<div class="t" style="top:303.37px;font-size:14px;color:#000;line-height:20px;text-shadow:0.6px 0 0 #000;left:323.0px;width:300px;text-align:center;">0</div>
<div class="t" style="top:303.37px;font-size:14px;color:#000;line-height:20px;text-shadow:0.6px 0 0 #000;left:360.0px;width:300px;text-align:center;">0</div>
<div class="t" style="top:303.37px;font-size:14px;color:#000;line-height:20px;text-shadow:0.6px 0 0 #000;left:397.0px;width:300px;text-align:center;">0</div>
<div class="t" style="top:303.37px;font-size:14px;color:#000;line-height:20px;text-shadow:0.6px 0 0 #000;left:434.0px;width:300px;text-align:center;">0</div>
<div class="t" style="top:303.37px;font-size:14px;color:#000;line-height:20px;text-shadow:0.6px 0 0 #000;left:471.0px;width:300px;text-align:center;">0</div>
<div class="t" style="top:303.37px;font-size:14px;color:#000;line-height:20px;text-shadow:0.6px 0 0 #000;left:508.0px;width:300px;text-align:center;">0</div>
<div class="t" style="top:303.37px;font-size:14px;color:#000;line-height:20px;text-shadow:0.6px 0 0 #000;left:545.0px;width:300px;text-align:center;">0</div>
<div class="t" style="top:303.37px;font-size:14px;color:#000;line-height:20px;text-shadow:0.6px 0 0 #000;left:582.0px;width:300px;text-align:center;">0</div>
<div class="t" style="top:303.37px;font-size:14px;color:#000;line-height:20px;text-shadow:0.6px 0 0 #000;left:619.0px;width:300px;text-align:center;">0</div>
<div class="t" style="top:303.37px;font-size:14px;color:#000;line-height:20px;text-shadow:0.6px 0 0 #000;left:656.0px;width:300px;text-align:center;">0</div>
<div class="t" style="top:303.37px;font-size:14px;color:#000;line-height:20px;text-shadow:0.6px 0 0 #000;left:693.0px;width:300px;text-align:center;">0</div>
<div class="t" style="top:303.37px;font-size:14px;color:#000;line-height:20px;text-shadow:0.6px 0 0 #000;left:730.0px;width:300px;text-align:center;">0</div>
<div class="t" style="top:303.37px;font-size:14px;color:#000;line-height:20px;text-shadow:0.6px 0 0 #000;left:767.0px;width:300px;text-align:center;">0</div>
<div class="t" style="top:303.37px;font-size:14px;color:#000;line-height:20px;text-shadow:0.6px 0 0 #000;left:804.0px;width:300px;text-align:center;">0</div>
<div class="t" style="top:303.37px;font-size:14px;color:#000;line-height:20px;text-shadow:0.6px 0 0 #000;left:841.0px;width:300px;text-align:center;">0</div>
<div class="t" style="top:303.37px;font-size:14px;color:#000;line-height:20px;text-shadow:0.6px 0 0 #000;left:878.0px;width:300px;text-align:center;">0</div>
<div class="t" style="top:303.37px;font-size:14px;color:#000;line-height:20px;text-shadow:0.6px 0 0 #000;left:915.0px;width:300px;text-align:center;">0</div>
<div style="position:absolute;left:10px;top:329px;width:118px;height:30px;background:#ece9d8;box-sizing:border-box;border-right:1px solid #000;border-bottom:1px solid #000;box-shadow:inset 1px 1px 0 #fff;"></div>
<div class="t" style="top:333.37px;font-size:14px;color:#000;line-height:20px;text-shadow:0.6px 0 0 #000;left:-82px;width:300px;text-align:center;">1500</div>
<div class="t" style="top:333.37px;font-size:14px;color:#000;line-height:20px;text-shadow:0.6px 0 0 #000;left:-4.5px;width:300px;text-align:center;">0</div>
<div class="t" style="top:333.37px;font-size:14px;color:#000;line-height:20px;text-shadow:0.6px 0 0 #000;left:31.5px;width:300px;text-align:center;">0</div>
<div class="t" style="top:333.37px;font-size:14px;color:#000;line-height:20px;text-shadow:0.6px 0 0 #000;left:67.5px;width:300px;text-align:center;">0</div>
<div class="t" style="top:333.37px;font-size:14px;color:#000;line-height:20px;text-shadow:0.6px 0 0 #000;left:103.5px;width:300px;text-align:center;">0</div>
<div class="t" style="top:333.37px;font-size:14px;color:#000;line-height:20px;text-shadow:0.6px 0 0 #000;left:139.5px;width:300px;text-align:center;">0</div>
<div class="t" style="top:333.37px;font-size:14px;color:#000;line-height:20px;text-shadow:0.6px 0 0 #000;left:175.5px;width:300px;text-align:center;">0</div>
<div class="t" style="top:333.37px;font-size:14px;color:#000;line-height:20px;text-shadow:0.6px 0 0 #000;left:212.0px;width:300px;text-align:center;">0</div>
<div class="t" style="top:333.37px;font-size:14px;color:#000;line-height:20px;text-shadow:0.6px 0 0 #000;left:249.0px;width:300px;text-align:center;">0</div>
<div class="t" style="top:333.37px;font-size:14px;color:#000;line-height:20px;text-shadow:0.6px 0 0 #000;left:286.0px;width:300px;text-align:center;">0</div>
<div class="t" style="top:333.37px;font-size:14px;color:#000;line-height:20px;text-shadow:0.6px 0 0 #000;left:323.0px;width:300px;text-align:center;">0</div>
<div class="t" style="top:333.37px;font-size:14px;color:#000;line-height:20px;text-shadow:0.6px 0 0 #000;left:360.0px;width:300px;text-align:center;">0</div>
<div class="t" style="top:333.37px;font-size:14px;color:#000;line-height:20px;text-shadow:0.6px 0 0 #000;left:397.0px;width:300px;text-align:center;">0</div>
<div class="t" style="top:333.37px;font-size:14px;color:#000;line-height:20px;text-shadow:0.6px 0 0 #000;left:434.0px;width:300px;text-align:center;">0</div>
<div class="t" style="top:333.37px;font-size:14px;color:#000;line-height:20px;text-shadow:0.6px 0 0 #000;left:471.0px;width:300px;text-align:center;">0</div>
<div class="t" style="top:333.37px;font-size:14px;color:#000;line-height:20px;text-shadow:0.6px 0 0 #000;left:508.0px;width:300px;text-align:center;">0</div>
<div class="t" style="top:333.37px;font-size:14px;color:#000;line-height:20px;text-shadow:0.6px 0 0 #000;left:545.0px;width:300px;text-align:center;">0</div>
<div class="t" style="top:333.37px;font-size:14px;color:#000;line-height:20px;text-shadow:0.6px 0 0 #000;left:582.0px;width:300px;text-align:center;">0</div>
<div class="t" style="top:333.37px;font-size:14px;color:#000;line-height:20px;text-shadow:0.6px 0 0 #000;left:619.0px;width:300px;text-align:center;">0</div>
<div class="t" style="top:333.37px;font-size:14px;color:#000;line-height:20px;text-shadow:0.6px 0 0 #000;left:656.0px;width:300px;text-align:center;">0</div>
<div class="t" style="top:333.37px;font-size:14px;color:#000;line-height:20px;text-shadow:0.6px 0 0 #000;left:693.0px;width:300px;text-align:center;">0</div>
<div class="t" style="top:333.37px;font-size:14px;color:#000;line-height:20px;text-shadow:0.6px 0 0 #000;left:730.0px;width:300px;text-align:center;">0</div>
<div class="t" style="top:333.37px;font-size:14px;color:#000;line-height:20px;text-shadow:0.6px 0 0 #000;left:767.0px;width:300px;text-align:center;">0</div>
<div class="t" style="top:333.37px;font-size:14px;color:#000;line-height:20px;text-shadow:0.6px 0 0 #000;left:804.0px;width:300px;text-align:center;">0</div>
<div class="t" style="top:333.37px;font-size:14px;color:#000;line-height:20px;text-shadow:0.6px 0 0 #000;left:841.0px;width:300px;text-align:center;">0</div>
<div class="t" style="top:333.37px;font-size:14px;color:#000;line-height:20px;text-shadow:0.6px 0 0 #000;left:878.0px;width:300px;text-align:center;">0</div>
<div class="t" style="top:333.37px;font-size:14px;color:#000;line-height:20px;text-shadow:0.6px 0 0 #000;left:915.0px;width:300px;text-align:center;">0</div>
<div style="position:absolute;left:10px;top:359px;width:118px;height:30px;background:#ece9d8;box-sizing:border-box;border-right:1px solid #000;border-bottom:1px solid #000;box-shadow:inset 1px 1px 0 #fff;"></div>
<div class="t" style="top:363.37px;font-size:14px;color:#000;line-height:20px;text-shadow:0.6px 0 0 #000;left:-82px;width:300px;text-align:center;">1100</div>
<div class="t" style="top:363.37px;font-size:14px;color:#000;line-height:20px;text-shadow:0.6px 0 0 #000;left:-4.5px;width:300px;text-align:center;">0</div>
<div class="t" style="top:363.37px;font-size:14px;color:#000;line-height:20px;text-shadow:0.6px 0 0 #000;left:31.5px;width:300px;text-align:center;">0</div>
<div class="t" style="top:363.37px;font-size:14px;color:#000;line-height:20px;text-shadow:0.6px 0 0 #000;left:67.5px;width:300px;text-align:center;">0</div>
<div class="t" style="top:363.37px;font-size:14px;color:#000;line-height:20px;text-shadow:0.6px 0 0 #000;left:103.5px;width:300px;text-align:center;">0</div>
<div class="t" style="top:363.37px;font-size:14px;color:#000;line-height:20px;text-shadow:0.6px 0 0 #000;left:139.5px;width:300px;text-align:center;">0</div>
<div class="t" style="top:363.37px;font-size:14px;color:#000;line-height:20px;text-shadow:0.6px 0 0 #000;left:175.5px;width:300px;text-align:center;">0</div>
<div class="t" style="top:363.37px;font-size:14px;color:#000;line-height:20px;text-shadow:0.6px 0 0 #000;left:212.0px;width:300px;text-align:center;">0</div>
<div class="t" style="top:363.37px;font-size:14px;color:#000;line-height:20px;text-shadow:0.6px 0 0 #000;left:249.0px;width:300px;text-align:center;">0</div>
<div class="t" style="top:363.37px;font-size:14px;color:#000;line-height:20px;text-shadow:0.6px 0 0 #000;left:286.0px;width:300px;text-align:center;">0</div>
<div class="t" style="top:363.37px;font-size:14px;color:#000;line-height:20px;text-shadow:0.6px 0 0 #000;left:323.0px;width:300px;text-align:center;">0</div>
<div class="t" style="top:363.37px;font-size:14px;color:#000;line-height:20px;text-shadow:0.6px 0 0 #000;left:360.0px;width:300px;text-align:center;">0</div>
<div class="t" style="top:363.37px;font-size:14px;color:#000;line-height:20px;text-shadow:0.6px 0 0 #000;left:397.0px;width:300px;text-align:center;">0</div>
<div class="t" style="top:363.37px;font-size:14px;color:#000;line-height:20px;text-shadow:0.6px 0 0 #000;left:434.0px;width:300px;text-align:center;">0</div>
<div class="t" style="top:363.37px;font-size:14px;color:#000;line-height:20px;text-shadow:0.6px 0 0 #000;left:471.0px;width:300px;text-align:center;">0</div>
<div class="t" style="top:363.37px;font-size:14px;color:#000;line-height:20px;text-shadow:0.6px 0 0 #000;left:508.0px;width:300px;text-align:center;">0</div>
<div class="t" style="top:363.37px;font-size:14px;color:#000;line-height:20px;text-shadow:0.6px 0 0 #000;left:545.0px;width:300px;text-align:center;">0</div>
<div class="t" style="top:363.37px;font-size:14px;color:#000;line-height:20px;text-shadow:0.6px 0 0 #000;left:582.0px;width:300px;text-align:center;">0</div>
<div class="t" style="top:363.37px;font-size:14px;color:#000;line-height:20px;text-shadow:0.6px 0 0 #000;left:619.0px;width:300px;text-align:center;">0</div>
<div class="t" style="top:363.37px;font-size:14px;color:#000;line-height:20px;text-shadow:0.6px 0 0 #000;left:656.0px;width:300px;text-align:center;">0</div>
<div class="t" style="top:363.37px;font-size:14px;color:#000;line-height:20px;text-shadow:0.6px 0 0 #000;left:693.0px;width:300px;text-align:center;">0</div>
<div class="t" style="top:363.37px;font-size:14px;color:#000;line-height:20px;text-shadow:0.6px 0 0 #000;left:730.0px;width:300px;text-align:center;">0</div>
<div class="t" style="top:363.37px;font-size:14px;color:#000;line-height:20px;text-shadow:0.6px 0 0 #000;left:767.0px;width:300px;text-align:center;">0</div>
<div class="t" style="top:363.37px;font-size:14px;color:#000;line-height:20px;text-shadow:0.6px 0 0 #000;left:804.0px;width:300px;text-align:center;">0</div>
<div class="t" style="top:363.37px;font-size:14px;color:#000;line-height:20px;text-shadow:0.6px 0 0 #000;left:841.0px;width:300px;text-align:center;">0</div>
<div class="t" style="top:363.37px;font-size:14px;color:#000;line-height:20px;text-shadow:0.6px 0 0 #000;left:878.0px;width:300px;text-align:center;">0</div>
<div class="t" style="top:363.37px;font-size:14px;color:#000;line-height:20px;text-shadow:0.6px 0 0 #000;left:915.0px;width:300px;text-align:center;">0</div>
<div style="position:absolute;left:10px;top:389px;width:118px;height:30px;background:#ece9d8;box-sizing:border-box;border-right:1px solid #000;border-bottom:1px solid #000;box-shadow:inset 1px 1px 0 #fff;"></div>
<div class="t" style="top:393.37px;font-size:14px;color:#000;line-height:20px;text-shadow:0.6px 0 0 #000;left:-82px;width:300px;text-align:center;">800</div>
<div class="t" style="top:393.37px;font-size:14px;color:#000;line-height:20px;text-shadow:0.6px 0 0 #000;left:-4.5px;width:300px;text-align:center;">0</div>
<div class="t" style="top:393.37px;font-size:14px;color:#000;line-height:20px;text-shadow:0.6px 0 0 #000;left:31.5px;width:300px;text-align:center;">0</div>
<div class="t" style="top:393.37px;font-size:14px;color:#000;line-height:20px;text-shadow:0.6px 0 0 #000;left:67.5px;width:300px;text-align:center;">0</div>
<div style="position:absolute;left:236px;top:389px;width:35px;height:29px;background:#0000ff;"></div>
<div class="t" style="top:393.37px;font-size:14px;color:#fff;line-height:20px;text-shadow:0.6px 0 0 #fff;left:103.5px;width:300px;text-align:center;">0</div>
<div class="t" style="top:393.37px;font-size:14px;color:#000;line-height:20px;text-shadow:0.6px 0 0 #000;left:139.5px;width:300px;text-align:center;">0</div>
<div class="t" style="top:393.37px;font-size:14px;color:#000;line-height:20px;text-shadow:0.6px 0 0 #000;left:175.5px;width:300px;text-align:center;">0</div>
<div class="t" style="top:393.37px;font-size:14px;color:#000;line-height:20px;text-shadow:0.6px 0 0 #000;left:212.0px;width:300px;text-align:center;">0</div>
<div class="t" style="top:393.37px;font-size:14px;color:#000;line-height:20px;text-shadow:0.6px 0 0 #000;left:249.0px;width:300px;text-align:center;">0</div>
<div class="t" style="top:393.37px;font-size:14px;color:#000;line-height:20px;text-shadow:0.6px 0 0 #000;left:286.0px;width:300px;text-align:center;">0</div>
<div class="t" style="top:393.37px;font-size:14px;color:#000;line-height:20px;text-shadow:0.6px 0 0 #000;left:323.0px;width:300px;text-align:center;">0</div>
<div class="t" style="top:393.37px;font-size:14px;color:#000;line-height:20px;text-shadow:0.6px 0 0 #000;left:360.0px;width:300px;text-align:center;">0</div>
<div class="t" style="top:393.37px;font-size:14px;color:#000;line-height:20px;text-shadow:0.6px 0 0 #000;left:397.0px;width:300px;text-align:center;">0</div>
<div class="t" style="top:393.37px;font-size:14px;color:#000;line-height:20px;text-shadow:0.6px 0 0 #000;left:434.0px;width:300px;text-align:center;">0</div>
<div class="t" style="top:393.37px;font-size:14px;color:#000;line-height:20px;text-shadow:0.6px 0 0 #000;left:471.0px;width:300px;text-align:center;">0</div>
<div class="t" style="top:393.37px;font-size:14px;color:#000;line-height:20px;text-shadow:0.6px 0 0 #000;left:508.0px;width:300px;text-align:center;">0</div>
<div class="t" style="top:393.37px;font-size:14px;color:#000;line-height:20px;text-shadow:0.6px 0 0 #000;left:545.0px;width:300px;text-align:center;">0</div>
<div class="t" style="top:393.37px;font-size:14px;color:#000;line-height:20px;text-shadow:0.6px 0 0 #000;left:582.0px;width:300px;text-align:center;">0</div>
<div class="t" style="top:393.37px;font-size:14px;color:#000;line-height:20px;text-shadow:0.6px 0 0 #000;left:619.0px;width:300px;text-align:center;">0</div>
<div class="t" style="top:393.37px;font-size:14px;color:#000;line-height:20px;text-shadow:0.6px 0 0 #000;left:656.0px;width:300px;text-align:center;">0</div>
<div class="t" style="top:393.37px;font-size:14px;color:#000;line-height:20px;text-shadow:0.6px 0 0 #000;left:693.0px;width:300px;text-align:center;">0</div>
<div class="t" style="top:393.37px;font-size:14px;color:#000;line-height:20px;text-shadow:0.6px 0 0 #000;left:730.0px;width:300px;text-align:center;">0</div>
<div class="t" style="top:393.37px;font-size:14px;color:#000;line-height:20px;text-shadow:0.6px 0 0 #000;left:767.0px;width:300px;text-align:center;">0</div>
<div class="t" style="top:393.37px;font-size:14px;color:#000;line-height:20px;text-shadow:0.6px 0 0 #000;left:804.0px;width:300px;text-align:center;">0</div>
<div class="t" style="top:393.37px;font-size:14px;color:#000;line-height:20px;text-shadow:0.6px 0 0 #000;left:841.0px;width:300px;text-align:center;">0</div>
<div class="t" style="top:393.37px;font-size:14px;color:#000;line-height:20px;text-shadow:0.6px 0 0 #000;left:878.0px;width:300px;text-align:center;">0</div>
<div class="t" style="top:393.37px;font-size:14px;color:#000;line-height:20px;text-shadow:0.6px 0 0 #000;left:915.0px;width:300px;text-align:center;">0</div>
<div style="position:absolute;left:10px;top:419px;width:118px;height:30px;background:#ece9d8;box-sizing:border-box;border-right:1px solid #000;border-bottom:1px solid #000;box-shadow:inset 1px 1px 0 #fff;"></div>
<div class="t" style="top:423.37px;font-size:14px;color:#000;line-height:20px;text-shadow:0.6px 0 0 #000;left:-82px;width:300px;text-align:center;">600</div>
<div class="t" style="top:423.37px;font-size:14px;color:#000;line-height:20px;text-shadow:0.6px 0 0 #000;left:-4.5px;width:300px;text-align:center;">0</div>
<div class="t" style="top:423.37px;font-size:14px;color:#000;line-height:20px;text-shadow:0.6px 0 0 #000;left:31.5px;width:300px;text-align:center;">0</div>
<div class="t" style="top:423.37px;font-size:14px;color:#000;line-height:20px;text-shadow:0.6px 0 0 #000;left:67.5px;width:300px;text-align:center;">0</div>
<div class="t" style="top:423.37px;font-size:14px;color:#000;line-height:20px;text-shadow:0.6px 0 0 #000;left:103.5px;width:300px;text-align:center;">0</div>
<div class="t" style="top:423.37px;font-size:14px;color:#000;line-height:20px;text-shadow:0.6px 0 0 #000;left:139.5px;width:300px;text-align:center;">0</div>
<div class="t" style="top:423.37px;font-size:14px;color:#000;line-height:20px;text-shadow:0.6px 0 0 #000;left:175.5px;width:300px;text-align:center;">0</div>
<div class="t" style="top:423.37px;font-size:14px;color:#000;line-height:20px;text-shadow:0.6px 0 0 #000;left:212.0px;width:300px;text-align:center;">0</div>
<div class="t" style="top:423.37px;font-size:14px;color:#000;line-height:20px;text-shadow:0.6px 0 0 #000;left:249.0px;width:300px;text-align:center;">0</div>
<div class="t" style="top:423.37px;font-size:14px;color:#000;line-height:20px;text-shadow:0.6px 0 0 #000;left:286.0px;width:300px;text-align:center;">0</div>
<div class="t" style="top:423.37px;font-size:14px;color:#000;line-height:20px;text-shadow:0.6px 0 0 #000;left:323.0px;width:300px;text-align:center;">0</div>
<div class="t" style="top:423.37px;font-size:14px;color:#000;line-height:20px;text-shadow:0.6px 0 0 #000;left:360.0px;width:300px;text-align:center;">0</div>
<div class="t" style="top:423.37px;font-size:14px;color:#000;line-height:20px;text-shadow:0.6px 0 0 #000;left:397.0px;width:300px;text-align:center;">0</div>
<div class="t" style="top:423.37px;font-size:14px;color:#000;line-height:20px;text-shadow:0.6px 0 0 #000;left:434.0px;width:300px;text-align:center;">0</div>
<div class="t" style="top:423.37px;font-size:14px;color:#000;line-height:20px;text-shadow:0.6px 0 0 #000;left:471.0px;width:300px;text-align:center;">0</div>
<div class="t" style="top:423.37px;font-size:14px;color:#000;line-height:20px;text-shadow:0.6px 0 0 #000;left:508.0px;width:300px;text-align:center;">0</div>
<div class="t" style="top:423.37px;font-size:14px;color:#000;line-height:20px;text-shadow:0.6px 0 0 #000;left:545.0px;width:300px;text-align:center;">0</div>
<div class="t" style="top:423.37px;font-size:14px;color:#000;line-height:20px;text-shadow:0.6px 0 0 #000;left:582.0px;width:300px;text-align:center;">0</div>
<div class="t" style="top:423.37px;font-size:14px;color:#000;line-height:20px;text-shadow:0.6px 0 0 #000;left:619.0px;width:300px;text-align:center;">0</div>
<div class="t" style="top:423.37px;font-size:14px;color:#000;line-height:20px;text-shadow:0.6px 0 0 #000;left:656.0px;width:300px;text-align:center;">0</div>
<div class="t" style="top:423.37px;font-size:14px;color:#000;line-height:20px;text-shadow:0.6px 0 0 #000;left:693.0px;width:300px;text-align:center;">0</div>
<div class="t" style="top:423.37px;font-size:14px;color:#000;line-height:20px;text-shadow:0.6px 0 0 #000;left:730.0px;width:300px;text-align:center;">0</div>
<div class="t" style="top:423.37px;font-size:14px;color:#000;line-height:20px;text-shadow:0.6px 0 0 #000;left:767.0px;width:300px;text-align:center;">0</div>
<div class="t" style="top:423.37px;font-size:14px;color:#000;line-height:20px;text-shadow:0.6px 0 0 #000;left:804.0px;width:300px;text-align:center;">0</div>
<div class="t" style="top:423.37px;font-size:14px;color:#000;line-height:20px;text-shadow:0.6px 0 0 #000;left:841.0px;width:300px;text-align:center;">0</div>
<div class="t" style="top:423.37px;font-size:14px;color:#000;line-height:20px;text-shadow:0.6px 0 0 #000;left:878.0px;width:300px;text-align:center;">0</div>
<div class="t" style="top:423.37px;font-size:14px;color:#000;line-height:20px;text-shadow:0.6px 0 0 #000;left:915.0px;width:300px;text-align:center;">0</div>
<div style="position:absolute;left:10px;top:449px;width:118px;height:30px;background:#ece9d8;box-sizing:border-box;border-right:1px solid #000;border-bottom:1px solid #000;box-shadow:inset 1px 1px 0 #fff;"></div>
<div class="t" style="top:453.37px;font-size:14px;color:#000;line-height:20px;text-shadow:0.6px 0 0 #000;left:-82px;width:300px;text-align:center;">300</div>
<div class="t" style="top:453.37px;font-size:14px;color:#000;line-height:20px;text-shadow:0.6px 0 0 #000;left:-4.5px;width:300px;text-align:center;">0</div>
<div class="t" style="top:453.37px;font-size:14px;color:#000;line-height:20px;text-shadow:0.6px 0 0 #000;left:31.5px;width:300px;text-align:center;">0</div>
<div class="t" style="top:453.37px;font-size:14px;color:#000;line-height:20px;text-shadow:0.6px 0 0 #000;left:67.5px;width:300px;text-align:center;">0</div>
<div class="t" style="top:453.37px;font-size:14px;color:#000;line-height:20px;text-shadow:0.6px 0 0 #000;left:103.5px;width:300px;text-align:center;">0</div>
<div class="t" style="top:453.37px;font-size:14px;color:#000;line-height:20px;text-shadow:0.6px 0 0 #000;left:139.5px;width:300px;text-align:center;">0</div>
<div class="t" style="top:453.37px;font-size:14px;color:#000;line-height:20px;text-shadow:0.6px 0 0 #000;left:175.5px;width:300px;text-align:center;">0</div>
<div class="t" style="top:453.37px;font-size:14px;color:#000;line-height:20px;text-shadow:0.6px 0 0 #000;left:212.0px;width:300px;text-align:center;">0</div>
<div class="t" style="top:453.37px;font-size:14px;color:#000;line-height:20px;text-shadow:0.6px 0 0 #000;left:249.0px;width:300px;text-align:center;">0</div>
<div class="t" style="top:453.37px;font-size:14px;color:#000;line-height:20px;text-shadow:0.6px 0 0 #000;left:286.0px;width:300px;text-align:center;">0</div>
<div class="t" style="top:453.37px;font-size:14px;color:#000;line-height:20px;text-shadow:0.6px 0 0 #000;left:323.0px;width:300px;text-align:center;">0</div>
<div class="t" style="top:453.37px;font-size:14px;color:#000;line-height:20px;text-shadow:0.6px 0 0 #000;left:360.0px;width:300px;text-align:center;">0</div>
<div class="t" style="top:453.37px;font-size:14px;color:#000;line-height:20px;text-shadow:0.6px 0 0 #000;left:397.0px;width:300px;text-align:center;">0</div>
<div class="t" style="top:453.37px;font-size:14px;color:#000;line-height:20px;text-shadow:0.6px 0 0 #000;left:434.0px;width:300px;text-align:center;">0</div>
<div class="t" style="top:453.37px;font-size:14px;color:#000;line-height:20px;text-shadow:0.6px 0 0 #000;left:471.0px;width:300px;text-align:center;">0</div>
<div class="t" style="top:453.37px;font-size:14px;color:#000;line-height:20px;text-shadow:0.6px 0 0 #000;left:508.0px;width:300px;text-align:center;">0</div>
<div class="t" style="top:453.37px;font-size:14px;color:#000;line-height:20px;text-shadow:0.6px 0 0 #000;left:545.0px;width:300px;text-align:center;">0</div>
<div class="t" style="top:453.37px;font-size:14px;color:#000;line-height:20px;text-shadow:0.6px 0 0 #000;left:582.0px;width:300px;text-align:center;">0</div>
<div class="t" style="top:453.37px;font-size:14px;color:#000;line-height:20px;text-shadow:0.6px 0 0 #000;left:619.0px;width:300px;text-align:center;">0</div>
<div class="t" style="top:453.37px;font-size:14px;color:#000;line-height:20px;text-shadow:0.6px 0 0 #000;left:656.0px;width:300px;text-align:center;">0</div>
<div class="t" style="top:453.37px;font-size:14px;color:#000;line-height:20px;text-shadow:0.6px 0 0 #000;left:693.0px;width:300px;text-align:center;">0</div>
<div class="t" style="top:453.37px;font-size:14px;color:#000;line-height:20px;text-shadow:0.6px 0 0 #000;left:730.0px;width:300px;text-align:center;">0</div>
<div class="t" style="top:453.37px;font-size:14px;color:#000;line-height:20px;text-shadow:0.6px 0 0 #000;left:767.0px;width:300px;text-align:center;">0</div>
<div class="t" style="top:453.37px;font-size:14px;color:#000;line-height:20px;text-shadow:0.6px 0 0 #000;left:804.0px;width:300px;text-align:center;">0</div>
<div class="t" style="top:453.37px;font-size:14px;color:#000;line-height:20px;text-shadow:0.6px 0 0 #000;left:841.0px;width:300px;text-align:center;">0</div>
<div class="t" style="top:453.37px;font-size:14px;color:#000;line-height:20px;text-shadow:0.6px 0 0 #000;left:878.0px;width:300px;text-align:center;">0</div>
<div class="t" style="top:453.37px;font-size:14px;color:#000;line-height:20px;text-shadow:0.6px 0 0 #000;left:915.0px;width:300px;text-align:center;">0</div>
<div style="position:absolute;left:10px;top:479px;width:118px;height:31px;background:#ece9d8;box-sizing:border-box;border-right:1px solid #000;border-bottom:1px solid #000;box-shadow:inset 1px 1px 0 #fff;"></div>
<div class="t" style="top:484.37px;font-size:14px;color:#000;line-height:20px;text-shadow:0.6px 0 0 #000;left:-82px;width:300px;text-align:center;">0</div>
<div class="t" style="top:484.37px;font-size:14px;color:#000;line-height:20px;text-shadow:0.6px 0 0 #000;left:-4.5px;width:300px;text-align:center;">0</div>
<div class="t" style="top:484.37px;font-size:14px;color:#000;line-height:20px;text-shadow:0.6px 0 0 #000;left:31.5px;width:300px;text-align:center;">0</div>
<div class="t" style="top:484.37px;font-size:14px;color:#000;line-height:20px;text-shadow:0.6px 0 0 #000;left:67.5px;width:300px;text-align:center;">0</div>
<div class="t" style="top:484.37px;font-size:14px;color:#000;line-height:20px;text-shadow:0.6px 0 0 #000;left:103.5px;width:300px;text-align:center;">0</div>
<div class="t" style="top:484.37px;font-size:14px;color:#000;line-height:20px;text-shadow:0.6px 0 0 #000;left:139.5px;width:300px;text-align:center;">0</div>
<div class="t" style="top:484.37px;font-size:14px;color:#000;line-height:20px;text-shadow:0.6px 0 0 #000;left:175.5px;width:300px;text-align:center;">0</div>
<div class="t" style="top:484.37px;font-size:14px;color:#000;line-height:20px;text-shadow:0.6px 0 0 #000;left:212.0px;width:300px;text-align:center;">0</div>
<div class="t" style="top:484.37px;font-size:14px;color:#000;line-height:20px;text-shadow:0.6px 0 0 #000;left:249.0px;width:300px;text-align:center;">0</div>
<div class="t" style="top:484.37px;font-size:14px;color:#000;line-height:20px;text-shadow:0.6px 0 0 #000;left:286.0px;width:300px;text-align:center;">0</div>
<div class="t" style="top:484.37px;font-size:14px;color:#000;line-height:20px;text-shadow:0.6px 0 0 #000;left:323.0px;width:300px;text-align:center;">0</div>
<div class="t" style="top:484.37px;font-size:14px;color:#000;line-height:20px;text-shadow:0.6px 0 0 #000;left:360.0px;width:300px;text-align:center;">0</div>
<div class="t" style="top:484.37px;font-size:14px;color:#000;line-height:20px;text-shadow:0.6px 0 0 #000;left:397.0px;width:300px;text-align:center;">0</div>
<div class="t" style="top:484.37px;font-size:14px;color:#000;line-height:20px;text-shadow:0.6px 0 0 #000;left:434.0px;width:300px;text-align:center;">0</div>
<div class="t" style="top:484.37px;font-size:14px;color:#000;line-height:20px;text-shadow:0.6px 0 0 #000;left:471.0px;width:300px;text-align:center;">0</div>
<div class="t" style="top:484.37px;font-size:14px;color:#000;line-height:20px;text-shadow:0.6px 0 0 #000;left:508.0px;width:300px;text-align:center;">0</div>
<div class="t" style="top:484.37px;font-size:14px;color:#000;line-height:20px;text-shadow:0.6px 0 0 #000;left:545.0px;width:300px;text-align:center;">0</div>
<div class="t" style="top:484.37px;font-size:14px;color:#000;line-height:20px;text-shadow:0.6px 0 0 #000;left:582.0px;width:300px;text-align:center;">0</div>
<div class="t" style="top:484.37px;font-size:14px;color:#000;line-height:20px;text-shadow:0.6px 0 0 #000;left:619.0px;width:300px;text-align:center;">0</div>
<div class="t" style="top:484.37px;font-size:14px;color:#000;line-height:20px;text-shadow:0.6px 0 0 #000;left:656.0px;width:300px;text-align:center;">0</div>
<div class="t" style="top:484.37px;font-size:14px;color:#000;line-height:20px;text-shadow:0.6px 0 0 #000;left:693.0px;width:300px;text-align:center;">0</div>
<div class="t" style="top:484.37px;font-size:14px;color:#000;line-height:20px;text-shadow:0.6px 0 0 #000;left:730.0px;width:300px;text-align:center;">0</div>
<div class="t" style="top:484.37px;font-size:14px;color:#000;line-height:20px;text-shadow:0.6px 0 0 #000;left:767.0px;width:300px;text-align:center;">0</div>
<div class="t" style="top:484.37px;font-size:14px;color:#000;line-height:20px;text-shadow:0.6px 0 0 #000;left:804.0px;width:300px;text-align:center;">0</div>
<div class="t" style="top:484.37px;font-size:14px;color:#000;line-height:20px;text-shadow:0.6px 0 0 #000;left:841.0px;width:300px;text-align:center;">0</div>
<div class="t" style="top:484.37px;font-size:14px;color:#000;line-height:20px;text-shadow:0.6px 0 0 #000;left:878.0px;width:300px;text-align:center;">0</div>
<div class="t" style="top:484.37px;font-size:14px;color:#000;line-height:20px;text-shadow:0.6px 0 0 #000;left:915.0px;width:300px;text-align:center;">0</div>
<div class="cb" style="left:19px;top:522px"><svg width="7" height="7" viewBox="0 0 7 7"><path d="M0 2 L0 4 L2 6 L3 6 L7 2 L7 0 L6 0 L2.5 3.5 L1 2 Z" fill="#000"/></svg></div>
<div class="t" style="top:517.63px;font-size:12px;color:#000;line-height:20px;letter-spacing:0.3px;text-shadow:0.6px 0 0 #000;left:36px;">Zmieniając wartość zmieniaj sąsiednie</div>
<div class="cb" style="left:328px;top:522px"><svg width="7" height="7" viewBox="0 0 7 7"><path d="M0 2 L0 4 L2 6 L3 6 L7 2 L7 0 L6 0 L2.5 3.5 L1 2 Z" fill="#000"/></svg></div>
<div class="t" style="top:517.63px;font-size:12px;color:#000;line-height:20px;letter-spacing:0.3px;text-shadow:0.6px 0 0 #000;left:346px;">Wyświetlaj wartości</div>
<div class="btn" style="left:1019px;top:515px;width:58px;height:23px"></div>
<div class="t" style="top:518.50px;font-size:13px;color:#000;line-height:20px;left:1033.6px;">Kasuj</div>
<div class="btn" style="left:1083px;top:48px;width:27px;height:27px"></div>
<svg class="abs" style="left:1090px;top:52px" width="14" height="20" viewBox="1090 52 14 20"><circle cx="1098" cy="55.6" r="1.5" fill="#c8f4f0" stroke="#000" stroke-width="1"/><path d="M1097.6 58.2 L1093.6 61.4 L1095.4 62.6 L1093.4 67 L1096 69.6 L1099.6 66.2 L1098.2 65 L1099.6 61.2 Z" fill="#30e0d0" stroke="#000" stroke-width="1.1"/></svg>
<div style="position:absolute;left:1087px;top:85px;width:23px;height:52px;background:#ece9d8;box-sizing:border-box;border:1px solid;border-color:#fff #716f64 #716f64 transparent;border-left:none;box-shadow:inset -1px -1px 0 #aca899;border-radius:0 3px 3px 0;"></div>
<div class="t" style="left:1037.5px;top:98.5px;width:120px;height:20px;line-height:20px;text-align:center;font-size:13px;letter-spacing:1px;text-shadow:0.9px 0 0 #000;transform:rotate(90deg);">Mapa</div>
<div style="position:absolute;left:1087px;top:137px;width:23px;height:75px;background:#ece9d8;box-sizing:border-box;border:1px solid;border-color:#fff #716f64 #716f64 transparent;border-left:none;box-shadow:inset -1px -1px 0 #aca899;border-radius:0 3px 3px 0;"></div>
<div class="t" style="left:1037.5px;top:166.8px;width:120px;height:20px;line-height:20px;text-align:center;font-size:13px;letter-spacing:1px;text-shadow:0.9px 0 0 #000;transform:rotate(90deg);">Odchyłka</div>
<div style="position:absolute;left:1085px;top:210px;width:27px;height:104px;background:#ece9d8;box-sizing:border-box;border:1px solid;border-color:#fff #716f64 #716f64 transparent;border-left:none;box-shadow:inset -1px -1px 0 #aca899;border-radius:0 3px 3px 0;"></div>
<div class="t" style="left:1038px;top:253.2px;width:120px;height:20px;line-height:20px;text-align:center;font-size:13px;letter-spacing:1px;text-shadow:0.9px 0 0 #000;transform:rotate(90deg);">Korekcja obr.</div>
<div style="position:absolute;left:1087px;top:314px;width:1px;height:231px;background:#716f64;"></div>
<div style="position:absolute;left:1113px;top:50px;width:2px;height:699px;background:#918d7a;"></div>
<div style="position:absolute;left:1113px;top:750px;width:1px;height:20px;background:#fff;"></div>
<div class="grp" style="left:1115px;top:52px;width:163px;height:38px;box-sizing:border-box"></div>
<div style="position:absolute;left:1121px;top:48px;width:96px;height:10px;background:#ece9d8;"></div>
<div class="t" style="top:42.63px;font-size:12px;color:#000;line-height:20px;letter-spacing:0.3px;text-shadow:0.6px 0 0 #000;left:1122.5px;">CIŚNIENIE [Bar]</div>
<div class="t" style="top:56.71px;font-size:16px;color:#008000;line-height:20px;letter-spacing:1px;text-shadow:0.6px 0 0 #008000;left:1121px;">Gazu</div>
<div class="cb" style="left:1213px;top:60px"><svg width="7" height="7" viewBox="0 0 7 7"><path d="M0 2 L0 4 L2 6 L3 6 L7 2 L7 0 L6 0 L2.5 3.5 L1 2 Z" fill="#000"/></svg></div>
<div class="t" style="top:56.71px;font-size:16px;color:#000080;line-height:20px;letter-spacing:1px;text-shadow:0.6px 0 0 #000080;right:7px;">1,19</div>
<div class="t" style="top:71.71px;font-size:16px;color:#808000;line-height:20px;letter-spacing:1px;text-shadow:0.6px 0 0 #808000;left:1121px;">MAP</div>
<div class="cb" style="left:1213px;top:75px"><svg width="7" height="7" viewBox="0 0 7 7"><path d="M0 2 L0 4 L2 6 L3 6 L7 2 L7 0 L6 0 L2.5 3.5 L1 2 Z" fill="#000"/></svg></div>
<div class="t" style="top:71.71px;font-size:16px;color:#000080;line-height:20px;letter-spacing:1px;text-shadow:0.6px 0 0 #000080;right:7px;">0,28</div>
<div class="grp" style="left:1115px;top:96px;width:163px;height:154px;box-sizing:border-box"></div>
<div style="position:absolute;left:1121px;top:92px;width:132px;height:10px;background:#ece9d8;"></div>
<div class="t" style="top:86.63px;font-size:12px;color:#000;line-height:20px;letter-spacing:0.3px;text-shadow:0.6px 0 0 #000;left:1122.5px;">CZAS WTRYSKU  [ms]</div>
<div class="t" style="top:102.83px;font-size:12px;color:#0000e0;line-height:20px;text-shadow:0.6px 0 0 #0000e0;left:1136px;">Benzyny</div>
<div class="t" style="top:102.83px;font-size:12px;color:#008000;line-height:20px;text-shadow:0.6px 0 0 #008000;left:1225.5px;">Gazu</div>
<div class="t" style="top:118.37px;font-size:14px;color:#0000c0;line-height:20px;letter-spacing:0.4px;text-shadow:0.6px 0 0 #0000c0;left:1124px;">B1</div>
<div class="cb" style="left:1143px;top:122px"><svg width="7" height="7" viewBox="0 0 7 7"><path d="M0 2 L0 4 L2 6 L3 6 L7 2 L7 0 L6 0 L2.5 3.5 L1 2 Z" fill="#000"/></svg></div>
<div class="t" style="top:118.71px;font-size:16px;color:#000080;line-height:20px;letter-spacing:1px;text-shadow:0.6px 0 0 #000080;right:88px;">3,7</div>
<div class="t" style="top:118.37px;font-size:14px;color:#008000;line-height:20px;letter-spacing:0.4px;text-shadow:0.6px 0 0 #008000;left:1203px;">G1</div>
<div class="cb" style="left:1223px;top:122px"><svg width="7" height="7" viewBox="0 0 7 7"><path d="M0 2 L0 4 L2 6 L3 6 L7 2 L7 0 L6 0 L2.5 3.5 L1 2 Z" fill="#000"/></svg></div>
<div class="t" style="top:118.71px;font-size:16px;color:#000080;line-height:20px;letter-spacing:1px;text-shadow:0.6px 0 0 #000080;right:7px;">4,0</div>
<div class="t" style="top:134.37px;font-size:14px;color:#1818c8;line-height:20px;letter-spacing:0.4px;text-shadow:0.6px 0 0 #1818c8;left:1124px;">B2</div>
<div class="cb" style="left:1143px;top:138px"><svg width="7" height="7" viewBox="0 0 7 7"><path d="M0 2 L0 4 L2 6 L3 6 L7 2 L7 0 L6 0 L2.5 3.5 L1 2 Z" fill="#000"/></svg></div>
<div class="t" style="top:134.71px;font-size:16px;color:#000080;line-height:20px;letter-spacing:1px;text-shadow:0.6px 0 0 #000080;right:88px;">3,7</div>
<div class="t" style="top:134.37px;font-size:14px;color:#00a000;line-height:20px;letter-spacing:0.4px;text-shadow:0.6px 0 0 #00a000;left:1203px;">G2</div>
<div class="cb" style="left:1223px;top:138px"><svg width="7" height="7" viewBox="0 0 7 7"><path d="M0 2 L0 4 L2 6 L3 6 L7 2 L7 0 L6 0 L2.5 3.5 L1 2 Z" fill="#000"/></svg></div>
<div class="t" style="top:134.71px;font-size:16px;color:#000080;line-height:20px;letter-spacing:1px;text-shadow:0.6px 0 0 #000080;right:7px;">4,0</div>
<div class="t" style="top:150.37px;font-size:14px;color:#3030d0;line-height:20px;letter-spacing:0.4px;text-shadow:0.6px 0 0 #3030d0;left:1124px;">B3</div>
<div class="cb" style="left:1143px;top:154px"><svg width="7" height="7" viewBox="0 0 7 7"><path d="M0 2 L0 4 L2 6 L3 6 L7 2 L7 0 L6 0 L2.5 3.5 L1 2 Z" fill="#000"/></svg></div>
<div class="t" style="top:150.71px;font-size:16px;color:#000080;line-height:20px;letter-spacing:1px;text-shadow:0.6px 0 0 #000080;right:88px;">3,7</div>
<div class="t" style="top:150.37px;font-size:14px;color:#00c000;line-height:20px;letter-spacing:0.4px;text-shadow:0.6px 0 0 #00c000;left:1203px;">G3</div>
<div class="cb" style="left:1223px;top:154px"><svg width="7" height="7" viewBox="0 0 7 7"><path d="M0 2 L0 4 L2 6 L3 6 L7 2 L7 0 L6 0 L2.5 3.5 L1 2 Z" fill="#000"/></svg></div>
<div class="t" style="top:150.71px;font-size:16px;color:#000080;line-height:20px;letter-spacing:1px;text-shadow:0.6px 0 0 #000080;right:7px;">4,0</div>
<div class="t" style="top:166.37px;font-size:14px;color:#4848d8;line-height:20px;letter-spacing:0.4px;text-shadow:0.6px 0 0 #4848d8;left:1124px;">B4</div>
<div class="cb" style="left:1143px;top:170px"><svg width="7" height="7" viewBox="0 0 7 7"><path d="M0 2 L0 4 L2 6 L3 6 L7 2 L7 0 L6 0 L2.5 3.5 L1 2 Z" fill="#000"/></svg></div>
<div class="t" style="top:166.71px;font-size:16px;color:#000080;line-height:20px;letter-spacing:1px;text-shadow:0.6px 0 0 #000080;right:88px;">3,7</div>
<div class="t" style="top:166.37px;font-size:14px;color:#00e000;line-height:20px;letter-spacing:0.4px;text-shadow:0.6px 0 0 #00e000;left:1203px;">G4</div>
<div class="cb" style="left:1223px;top:170px"><svg width="7" height="7" viewBox="0 0 7 7"><path d="M0 2 L0 4 L2 6 L3 6 L7 2 L7 0 L6 0 L2.5 3.5 L1 2 Z" fill="#000"/></svg></div>
<div class="t" style="top:166.71px;font-size:16px;color:#000080;line-height:20px;letter-spacing:1px;text-shadow:0.6px 0 0 #000080;right:7px;">4,0</div>
<div class="t" style="top:182.37px;font-size:14px;color:#7070e0;line-height:20px;letter-spacing:0.4px;text-shadow:0.6px 0 0 #7070e0;left:1124px;">B5</div>
<div class="cb" style="left:1143px;top:186px"><svg width="7" height="7" viewBox="0 0 7 7"><path d="M0 2 L0 4 L2 6 L3 6 L7 2 L7 0 L6 0 L2.5 3.5 L1 2 Z" fill="#000"/></svg></div>
<div class="t" style="top:182.71px;font-size:16px;color:#000080;line-height:20px;letter-spacing:1px;text-shadow:0.6px 0 0 #000080;right:88px;">0,0</div>
<div class="t" style="top:182.37px;font-size:14px;color:#50f050;line-height:20px;letter-spacing:0.4px;text-shadow:0.6px 0 0 #50f050;left:1203px;">G5</div>
<div class="cb" style="left:1223px;top:186px"><svg width="7" height="7" viewBox="0 0 7 7"><path d="M0 2 L0 4 L2 6 L3 6 L7 2 L7 0 L6 0 L2.5 3.5 L1 2 Z" fill="#000"/></svg></div>
<div class="t" style="top:182.71px;font-size:16px;color:#000080;line-height:20px;letter-spacing:1px;text-shadow:0.6px 0 0 #000080;right:7px;">0,0</div>
<div class="t" style="top:198.37px;font-size:14px;color:#9090e8;line-height:20px;letter-spacing:0.4px;text-shadow:0.6px 0 0 #9090e8;left:1124px;">B6</div>
<div class="cb" style="left:1143px;top:202px"><svg width="7" height="7" viewBox="0 0 7 7"><path d="M0 2 L0 4 L2 6 L3 6 L7 2 L7 0 L6 0 L2.5 3.5 L1 2 Z" fill="#000"/></svg></div>
<div class="t" style="top:198.71px;font-size:16px;color:#000080;line-height:20px;letter-spacing:1px;text-shadow:0.6px 0 0 #000080;right:88px;">0,0</div>
<div class="t" style="top:198.37px;font-size:14px;color:#80f080;line-height:20px;letter-spacing:0.4px;text-shadow:0.6px 0 0 #80f080;left:1203px;">G6</div>
<div class="cb" style="left:1223px;top:202px"><svg width="7" height="7" viewBox="0 0 7 7"><path d="M0 2 L0 4 L2 6 L3 6 L7 2 L7 0 L6 0 L2.5 3.5 L1 2 Z" fill="#000"/></svg></div>
<div class="t" style="top:198.71px;font-size:16px;color:#000080;line-height:20px;letter-spacing:1px;text-shadow:0.6px 0 0 #000080;right:7px;">0,0</div>
<div class="t" style="top:214.37px;font-size:14px;color:#b0b0f0;line-height:20px;letter-spacing:0.4px;text-shadow:0.6px 0 0 #b0b0f0;left:1124px;">B7</div>
<div class="cb" style="left:1143px;top:218px"><svg width="7" height="7" viewBox="0 0 7 7"><path d="M0 2 L0 4 L2 6 L3 6 L7 2 L7 0 L6 0 L2.5 3.5 L1 2 Z" fill="#000"/></svg></div>
<div class="t" style="top:214.71px;font-size:16px;color:#000080;line-height:20px;letter-spacing:1px;text-shadow:0.6px 0 0 #000080;right:88px;">0,0</div>
<div class="t" style="top:214.37px;font-size:14px;color:#a8f4a8;line-height:20px;letter-spacing:0.4px;text-shadow:0.6px 0 0 #a8f4a8;left:1203px;">G7</div>
<div class="cb" style="left:1223px;top:218px"><svg width="7" height="7" viewBox="0 0 7 7"><path d="M0 2 L0 4 L2 6 L3 6 L7 2 L7 0 L6 0 L2.5 3.5 L1 2 Z" fill="#000"/></svg></div>
<div class="t" style="top:214.71px;font-size:16px;color:#000080;line-height:20px;letter-spacing:1px;text-shadow:0.6px 0 0 #000080;right:7px;">0,0</div>
<div class="t" style="top:230.37px;font-size:14px;color:#d0d0f4;line-height:20px;letter-spacing:0.4px;text-shadow:0.6px 0 0 #d0d0f4;left:1124px;">B8</div>
<div class="cb" style="left:1143px;top:234px"><svg width="7" height="7" viewBox="0 0 7 7"><path d="M0 2 L0 4 L2 6 L3 6 L7 2 L7 0 L6 0 L2.5 3.5 L1 2 Z" fill="#000"/></svg></div>
<div class="t" style="top:230.71px;font-size:16px;color:#000080;line-height:20px;letter-spacing:1px;text-shadow:0.6px 0 0 #000080;right:88px;">0,0</div>
<div class="t" style="top:230.37px;font-size:14px;color:#c8f4c8;line-height:20px;letter-spacing:0.4px;text-shadow:0.6px 0 0 #c8f4c8;left:1203px;">G8</div>
<div class="cb" style="left:1223px;top:234px"><svg width="7" height="7" viewBox="0 0 7 7"><path d="M0 2 L0 4 L2 6 L3 6 L7 2 L7 0 L6 0 L2.5 3.5 L1 2 Z" fill="#000"/></svg></div>
<div class="t" style="top:230.71px;font-size:16px;color:#000080;line-height:20px;letter-spacing:1px;text-shadow:0.6px 0 0 #000080;right:7px;">0,0</div>
<div class="grp" style="left:1115px;top:259px;width:163px;height:41px;box-sizing:border-box"></div>
<div style="position:absolute;left:1121px;top:255px;width:124px;height:10px;background:#ece9d8;"></div>
<div class="t" style="top:249.63px;font-size:12px;color:#000;line-height:20px;letter-spacing:0.3px;text-shadow:0.6px 0 0 #000;left:1123.8px;">TEMPERATURA  [°C]</div>
<div class="t" style="top:264.21px;font-size:16px;color:#800000;line-height:20px;letter-spacing:1px;text-shadow:0.6px 0 0 #800000;left:1121px;">Gaz</div>
<div class="cb" style="left:1213px;top:267.5px"><svg width="7" height="7" viewBox="0 0 7 7"><path d="M0 2 L0 4 L2 6 L3 6 L7 2 L7 0 L6 0 L2.5 3.5 L1 2 Z" fill="#000"/></svg></div>
<div class="t" style="top:264.21px;font-size:16px;color:#000080;line-height:20px;letter-spacing:1px;text-shadow:0.6px 0 0 #000080;right:7px;">35</div>
<div class="t" style="top:279.21px;font-size:16px;color:#ff8050;line-height:20px;letter-spacing:1px;text-shadow:0.6px 0 0 #ff8050;left:1121px;">Red.</div>
<div class="cb" style="left:1213px;top:282.5px"><svg width="7" height="7" viewBox="0 0 7 7"><path d="M0 2 L0 4 L2 6 L3 6 L7 2 L7 0 L6 0 L2.5 3.5 L1 2 Z" fill="#000"/></svg></div>
<div class="t" style="top:279.21px;font-size:16px;color:#000080;line-height:20px;letter-spacing:1px;text-shadow:0.6px 0 0 #000080;right:7px;">61</div>
<div class="grp" style="left:1115px;top:306px;width:163px;height:57px;box-sizing:border-box"></div>
<div style="position:absolute;left:1121px;top:302px;width:80px;height:10px;background:#ece9d8;"></div>
<div class="t" style="top:297.03px;font-size:12px;color:#000;line-height:20px;letter-spacing:0.3px;text-shadow:0.6px 0 0 #000;left:1122.5px;">NAPIĘCIE [V]</div>
<div class="t" style="top:310.71px;font-size:16px;color:#ff00ff;line-height:20px;letter-spacing:1px;text-shadow:0.6px 0 0 #ff00ff;left:1121px;">Lambda 1</div>
<div class="cb" style="left:1213px;top:314px"><svg width="7" height="7" viewBox="0 0 7 7"><path d="M0 2 L0 4 L2 6 L3 6 L7 2 L7 0 L6 0 L2.5 3.5 L1 2 Z" fill="#000"/></svg></div>
<div class="t" style="top:310.71px;font-size:16px;color:#000080;line-height:20px;letter-spacing:1px;text-shadow:0.6px 0 0 #000080;right:7px;">0,53</div>
<div class="t" style="top:326.71px;font-size:16px;color:#a0a0a0;line-height:20px;letter-spacing:1px;text-shadow:0.6px 0 0 #a0a0a0;left:1121px;">Lambda 2</div>
<div class="cb" style="left:1213px;top:330px"><svg width="7" height="7" viewBox="0 0 7 7"><path d="M0 2 L0 4 L2 6 L3 6 L7 2 L7 0 L6 0 L2.5 3.5 L1 2 Z" fill="#000"/></svg></div>
<div class="t" style="top:326.71px;font-size:16px;color:#b0b0b0;line-height:20px;letter-spacing:1px;text-shadow:0.6px 0 0 #b0b0b0;right:7px;">0,00</div>
<div class="t" style="top:342.71px;font-size:16px;color:#808000;line-height:20px;letter-spacing:1px;text-shadow:0.6px 0 0 #808000;left:1121px;">Zasilanie</div>
<div class="cb" style="left:1213px;top:346px"><svg width="7" height="7" viewBox="0 0 7 7"><path d="M0 2 L0 4 L2 6 L3 6 L7 2 L7 0 L6 0 L2.5 3.5 L1 2 Z" fill="#000"/></svg></div>
<div class="t" style="top:342.71px;font-size:16px;color:#000080;line-height:20px;letter-spacing:1px;text-shadow:0.6px 0 0 #000080;right:7px;">14,43</div>
<div class="grp" style="left:1115px;top:370px;width:163px;height:24px;box-sizing:border-box"></div>
<div style="position:absolute;left:1121px;top:366px;width:96px;height:10px;background:#ece9d8;"></div>
<div class="t" style="top:360.33px;font-size:12px;color:#000;line-height:20px;letter-spacing:0.3px;text-shadow:0.6px 0 0 #000;left:1122.5px;">Obroty [obr/min]</div>
<div class="t" style="top:375.71px;font-size:16px;color:#ff0000;line-height:20px;letter-spacing:1px;text-shadow:0.6px 0 0 #ff0000;left:1121px;">RPM</div>
<div class="cb" style="left:1213px;top:379px"><svg width="7" height="7" viewBox="0 0 7 7"><path d="M0 2 L0 4 L2 6 L3 6 L7 2 L7 0 L6 0 L2.5 3.5 L1 2 Z" fill="#000"/></svg></div>
<div class="t" style="top:375.71px;font-size:16px;color:#000080;line-height:20px;letter-spacing:1px;text-shadow:0.6px 0 0 #000080;right:7px;">800</div>
<div class="grp" style="left:1115px;top:401px;width:163px;height:23px;box-sizing:border-box"></div>
<div style="position:absolute;left:1121px;top:397px;width:104px;height:10px;background:#ece9d8;"></div>
<div class="t" style="top:391.53px;font-size:12px;color:#000;line-height:20px;letter-spacing:0.3px;text-shadow:0.6px 0 0 #000;left:1122.5px;">Obciążenie silnika</div>
<div style="position:absolute;left:1117px;top:408px;width:2px;height:13px;background:#108080;"></div>
<div class="t" style="top:405.73px;font-size:12px;color:#000;line-height:20px;letter-spacing:0.5px;text-shadow:0.6px 0 0 #000;left:1038px;width:300px;text-align:center;">2%</div>
<div class="cb" style="left:1262px;top:409px"><svg width="7" height="7" viewBox="0 0 7 7"><path d="M0 2 L0 4 L2 6 L3 6 L7 2 L7 0 L6 0 L2.5 3.5 L1 2 Z" fill="#000"/></svg></div>
<div class="grp" style="left:1115px;top:431px;width:163px;height:46px;box-sizing:border-box"></div>
<div style="position:absolute;left:1121px;top:427px;width:84px;height:10px;background:#ece9d8;"></div>
<div class="t" style="top:422.36px;font-size:11px;color:#202020;line-height:20px;left:1122.5px;">Aktywne gazowe</div>
<svg class="abs" style="left:1123px;top:440px" width="13" height="22" viewBox="0 0 13 22"><path d="M6.5 1.5 h3" stroke="#202020" stroke-width="1" fill="none"/><rect x="6" y="2.5" width="4" height="3" fill="#f4f4f0"/><path d="M5.5 2.5 v3" stroke="#505050" stroke-width="1"/><path d="M0 6.5 L3.3 3.6 L3.3 5 L12 5 L12 8 L3.3 8 L3.3 8.6 Z" fill="#383838"/><rect x="3.3" y="7.2" width="8.9" height="8.3" fill="#10b418"/><rect x="3.3" y="7.2" width="8.9" height="1.3" fill="#286030"/><path d="M5.5 18 h5" stroke="#505850" stroke-width="1"/><path d="M6 21 h4" stroke="#50c060" stroke-width="1"/></svg>
<svg class="abs" style="left:1140px;top:440px" width="13" height="22" viewBox="0 0 13 22"><path d="M6.5 1.5 h3" stroke="#202020" stroke-width="1" fill="none"/><rect x="6" y="2.5" width="4" height="3" fill="#f4f4f0"/><path d="M5.5 2.5 v3" stroke="#505050" stroke-width="1"/><path d="M0 6.5 L3.3 3.6 L3.3 5 L12 5 L12 8 L3.3 8 L3.3 8.6 Z" fill="#383838"/><rect x="3.3" y="7.2" width="8.9" height="8.3" fill="#10b418"/><rect x="3.3" y="7.2" width="8.9" height="1.3" fill="#286030"/><path d="M5.5 18 h5" stroke="#505850" stroke-width="1"/><path d="M6 21 h4" stroke="#50c060" stroke-width="1"/></svg>
<svg class="abs" style="left:1158px;top:440px" width="13" height="22" viewBox="0 0 13 22"><path d="M6.5 1.5 h3" stroke="#202020" stroke-width="1" fill="none"/><rect x="6" y="2.5" width="4" height="3" fill="#f4f4f0"/><path d="M5.5 2.5 v3" stroke="#505050" stroke-width="1"/><path d="M0 6.5 L3.3 3.6 L3.3 5 L12 5 L12 8 L3.3 8 L3.3 8.6 Z" fill="#383838"/><rect x="3.3" y="7.2" width="8.9" height="8.3" fill="#10b418"/><rect x="3.3" y="7.2" width="8.9" height="1.3" fill="#286030"/><path d="M5.5 18 h5" stroke="#505850" stroke-width="1"/><path d="M6 21 h4" stroke="#50c060" stroke-width="1"/></svg>
<svg class="abs" style="left:1176px;top:440px" width="13" height="22" viewBox="0 0 13 22"><path d="M6.5 1.5 h3" stroke="#202020" stroke-width="1" fill="none"/><rect x="6" y="2.5" width="4" height="3" fill="#f4f4f0"/><path d="M5.5 2.5 v3" stroke="#505050" stroke-width="1"/><path d="M0 6.5 L3.3 3.6 L3.3 5 L12 5 L12 8 L3.3 8 L3.3 8.6 Z" fill="#383838"/><rect x="3.3" y="7.2" width="8.9" height="8.3" fill="#10b418"/><rect x="3.3" y="7.2" width="8.9" height="1.3" fill="#286030"/><path d="M5.5 18 h5" stroke="#505850" stroke-width="1"/><path d="M6 21 h4" stroke="#50c060" stroke-width="1"/></svg>
<div class="t" style="top:459.50px;font-size:13px;color:#000;line-height:20px;text-shadow:0.6px 0 0 #000;left:980.8999999999999px;width:300px;text-align:center;">1</div>
<div class="t" style="top:459.50px;font-size:13px;color:#000;line-height:20px;text-shadow:0.6px 0 0 #000;left:999.3px;width:300px;text-align:center;">2</div>
<div class="t" style="top:459.50px;font-size:13px;color:#000;line-height:20px;text-shadow:0.6px 0 0 #000;left:1017.7px;width:300px;text-align:center;">3</div>
<div class="t" style="top:459.50px;font-size:13px;color:#000;line-height:20px;text-shadow:0.6px 0 0 #000;left:1035.7px;width:300px;text-align:center;">4</div>
<div style="position:absolute;left:1148px;top:671px;width:92px;height:78px;background:#000;box-sizing:border-box;border:1px solid #fff;"></div>
<svg class="abs" style="left:1149px;top:672px" width="90" height="76" viewBox="1149 672 90 76">
<polygon points="1157.5,727.4 1170.6,710.2 1171.3,719.8 1158.2,735" fill="none" stroke="#d8d8d8" stroke-width="1"/>
<polygon points="1174,707.5 1185.7,698.5 1186.4,708.1 1174.7,716.4" fill="#1a9a6a" stroke="#c0e0d0" stroke-width="0.6"/>
<polygon points="1188.5,696.5 1199.5,690.3 1200.2,699.9 1189.1,705.4" fill="#1a9a6a" stroke="#c0e0d0" stroke-width="0.6"/>
<polygon points="1202.2,687.5 1213.2,684.1 1213.9,694.4 1202.9,698.5" fill="none" stroke="#d8d8d8" stroke-width="1"/>
<polygon points="1217.3,683.4 1228.3,681 1228.8,691.4 1218,693.7" fill="none" stroke="#d8d8d8" stroke-width="1"/>
<circle cx="1187.1" cy="724" r="5.3" fill="#109010" stroke="#d0e8d0" stroke-width="0.8"/>
<circle cx="1213.9" cy="723" r="15.2" fill="none" stroke="#fff" stroke-width="1"/>
<text x="1213.9" y="727.2" text-anchor="middle" font-family="Liberation Sans,sans-serif" font-size="11.5" fill="#fff">B/G</text>
</svg>
<div style="position:absolute;left:1117px;top:752px;width:163px;height:16px;background:#008000;"></div>
<div class="t" style="top:750.37px;font-size:14px;color:#ffffc8;line-height:20px;left:1048px;width:300px;text-align:center;">Gaz</div>
<div style="position:absolute;left:4px;top:546px;width:1107px;height:4px;background:#f2f0e6;"></div>
<div style="position:absolute;left:4px;top:550px;width:1107px;height:196px;background:#fff;box-sizing:border-box;border-right:1px solid #c4c1b2;border-bottom:1px solid #c4c1b2;"></div>
<div style="position:absolute;left:3px;top:546px;width:1px;height:202px;background:#f6f4ec;"></div>
<div style="position:absolute;left:2px;top:748px;width:1113px;height:2px;background:#8a8672;"></div>
<svg class="abs" style="left:5px;top:547px" width="1105" height="198" viewBox="5 547 1105 198" font-family="Liberation Sans,sans-serif" font-size="10" fill="#303030">
<path d="M58.5 558 V716 M85.5 558 V716 M111.5 558 V716 M138.5 558 V716 M164.5 558 V716 M190.5 558 V716 M217.5 558 V716 M243.5 558 V716 M269.5 558 V716 M296.5 558 V716 M322.5 558 V716 M348.5 558 V716 M375.5 558 V716 M401.5 558 V716 M428.5 558 V716 M454.5 558 V716 M480.5 558 V716 M507.5 558 V716 M533.5 558 V716 M560.5 558 V716 M586.5 558 V716 M612.5 558 V716 M639.5 558 V716 M665.5 558 V716 M691.5 558 V716 M718.5 558 V716 M744.5 558 V716 M770.5 558 V716 M797.5 558 V716 M823.5 558 V716 M850.5 558 V716 M876.5 558 V716 M902.5 558 V716 M929.5 558 V716 M955.5 558 V716 M982.5 558 V716 M1008.5 558 V716 M1034.5 558 V716 M1061.5 558 V716 M1087.5 558 V716 M33 701.5 H1087 M33 684.5 H1087 M33 668.5 H1087 M33 652.5 H1087 M33 635.5 H1087 M33 619.5 H1087 M33 603.5 H1087 M33 586.5 H1087 M33 570.5 H1087" stroke="#bcbcbc" stroke-width="1" stroke-dasharray="3 3" fill="none" shape-rendering="crispEdges"/>
<path d="M32.5 719 V723 M58.5 719 V723 M84.5 719 V723 M111.5 719 V723 M137.5 719 V723 M163.5 719 V723 M190.5 719 V723 M216.5 719 V723 M243.5 719 V723 M269.5 719 V723 M295.5 719 V723 M322.5 719 V723 M348.5 719 V723 M374.5 719 V723 M401.5 719 V723 M427.5 719 V723 M454.5 719 V723 M480.5 719 V723 M506.5 719 V723 M533.5 719 V723 M559.5 719 V723 M585.5 719 V723 M612.5 719 V723 M638.5 719 V723 M665.5 719 V723 M691.5 719 V723 M717.5 719 V723 M744.5 719 V723 M770.5 719 V723 M796.5 719 V723 M823.5 719 V723 M849.5 719 V723 M876.5 719 V723 M902.5 719 V723 M928.5 719 V723 M955.5 719 V723 M981.5 719 V723 M1007.5 719 V723 M1034.5 719 V723 M1060.5 719 V723 M1087.5 719 V723 M28 717.5 H31 M28 701.5 H31 M28 684.5 H31 M28 668.5 H31 M28 652.5 H31 M28 635.5 H31 M28 619.5 H31 M28 603.5 H31 M28 586.5 H31 M28 570.5 H31 M28 554.5 H31" stroke="#505050" stroke-width="1" fill="none" shape-rendering="crispEdges"/>
<path d="M38.5 719 V721 M45.5 719 V721 M51.5 719 V721 M64.5 719 V721 M71.5 719 V721 M78.5 719 V721 M91.5 719 V721 M97.5 719 V721 M104.5 719 V721 M117.5 719 V721 M124.5 719 V721 M130.5 719 V721 M144.5 719 V721 M150.5 719 V721 M157.5 719 V721 M170.5 719 V721 M177.5 719 V721 M183.5 719 V721 M196.5 719 V721 M203.5 719 V721 M210.5 719 V721 M223.5 719 V721 M229.5 719 V721 M236.5 719 V721 M249.5 719 V721 M256.5 719 V721 M262.5 719 V721 M275.5 719 V721 M282.5 719 V721 M289.5 719 V721 M302.5 719 V721 M308.5 719 V721 M315.5 719 V721 M328.5 719 V721 M335.5 719 V721 M341.5 719 V721 M355.5 719 V721 M361.5 719 V721 M368.5 719 V721 M381.5 719 V721 M388.5 719 V721 M394.5 719 V721 M407.5 719 V721 M414.5 719 V721 M421.5 719 V721 M434.5 719 V721 M440.5 719 V721 M447.5 719 V721 M460.5 719 V721 M467.5 719 V721 M473.5 719 V721 M486.5 719 V721 M493.5 719 V721 M500.5 719 V721 M513.5 719 V721 M519.5 719 V721 M526.5 719 V721 M539.5 719 V721 M546.5 719 V721 M552.5 719 V721 M566.5 719 V721 M572.5 719 V721 M579.5 719 V721 M592.5 719 V721 M599.5 719 V721 M605.5 719 V721 M618.5 719 V721 M625.5 719 V721 M632.5 719 V721 M645.5 719 V721 M651.5 719 V721 M658.5 719 V721 M671.5 719 V721 M678.5 719 V721 M684.5 719 V721 M697.5 719 V721 M704.5 719 V721 M711.5 719 V721 M724.5 719 V721 M730.5 719 V721 M737.5 719 V721 M750.5 719 V721 M757.5 719 V721 M763.5 719 V721 M777.5 719 V721 M783.5 719 V721 M790.5 719 V721 M803.5 719 V721 M810.5 719 V721 M816.5 719 V721 M829.5 719 V721 M836.5 719 V721 M843.5 719 V721 M856.5 719 V721 M862.5 719 V721 M869.5 719 V721 M882.5 719 V721 M889.5 719 V721 M895.5 719 V721 M908.5 719 V721 M915.5 719 V721 M922.5 719 V721 M935.5 719 V721 M941.5 719 V721 M948.5 719 V721 M961.5 719 V721 M968.5 719 V721 M974.5 719 V721 M988.5 719 V721 M994.5 719 V721 M1001.5 719 V721 M1014.5 719 V721 M1021.5 719 V721 M1027.5 719 V721 M1040.5 719 V721 M1047.5 719 V721 M1054.5 719 V721 M1067.5 719 V721 M1073.5 719 V721 M1080.5 719 V721 M29.5 713.5 H31 M29.5 709.5 H31 M29.5 705.5 H31 M29.5 697.5 H31 M29.5 693.5 H31 M29.5 688.5 H31 M29.5 680.5 H31 M29.5 676.5 H31 M29.5 672.5 H31 M29.5 664.5 H31 M29.5 660.5 H31 M29.5 656.5 H31 M29.5 648.5 H31 M29.5 644.5 H31 M29.5 639.5 H31 M29.5 631.5 H31 M29.5 627.5 H31 M29.5 623.5 H31 M29.5 615.5 H31 M29.5 611.5 H31 M29.5 607.5 H31 M29.5 599.5 H31 M29.5 595.5 H31 M29.5 590.5 H31 M29.5 582.5 H31 M29.5 578.5 H31 M29.5 574.5 H31 M29.5 566.5 H31 M29.5 562.5 H31 M29.5 558.5 H31" stroke="#808080" stroke-width="1" fill="none" shape-rendering="crispEdges"/>
<polyline points="32.0,622.9 179.7,622.9 182.9,620.9 580.6,620.9 585.9,620.3 1065.9,620.3 1071.2,618.6 1076.5,620.9 1087.0,619.6" fill="none" stroke="#f09060" stroke-width="1" shape-rendering="crispEdges"/>
<polyline points="32.0,662.2 733.6,662.2 738.9,660.9 749.4,661.6 760.0,660.6 770.5,661.6 1087.0,661.6" fill="none" stroke="#800000" stroke-width="1" shape-rendering="crispEdges"/>
<polyline points="32.0,671.1 770.5,671.1 775.8,670.1 781.0,671.1 902.4,671.1 907.6,670.1 918.2,671.1 1039.5,671.1 1044.8,670.4 1050.1,671.1 1087.0,671.1" fill="none" stroke="#909020" stroke-width="1" shape-rendering="crispEdges"/>
<polyline points="32.0,679.0 686.1,679.0 691.4,680.3 701.9,679.0 744.1,679.0 749.4,680.3 760.0,679.0 1050.1,679.0 1055.3,680.6 1065.9,679.0 1087.0,679.0" fill="none" stroke="#008000" stroke-width="1" shape-rendering="crispEdges"/>
<polyline points="32.0,691.8 185.0,691.8 190.2,690.4 248.3,690.4 253.6,691.8 295.8,691.8 306.3,690.4 316.9,691.1 337.9,689.8 359.1,691.1 401.2,691.8 422.4,691.1 464.6,691.1 475.1,691.8 506.8,691.8 517.3,690.8 549.0,690.4 559.5,691.8 612.2,691.8 622.8,690.4 654.5,690.4 665.0,691.8 707.2,691.8 717.8,690.4 738.9,691.1 749.4,691.8 823.2,691.8 833.8,690.4 854.9,690.4 865.5,691.8 907.6,691.8 918.2,690.4 960.4,690.4 971.0,691.8 1044.8,691.8 1055.3,690.4 1087.0,690.4" fill="none" stroke="#c81818" stroke-width="1" shape-rendering="crispEdges"/>
<polyline points="32.0,718.0 54.2,718.0 57.6,706.2 61.0,700.9 71.6,699.6 82.1,700.9 87.7,708.2 93.2,718.0 131.7,718.0 137.2,706.2 142.8,700.9 157.3,699.6 171.8,700.9 177.1,708.2 182.3,718.0 218.7,718.0 225.6,706.2 232.4,700.9 241.2,699.6 249.9,700.9 257.0,708.2 264.1,718.0 301.6,718.0 306.6,706.2 311.6,700.9 326.6,699.6 341.6,700.9 348.0,708.2 354.3,718.0 412.9,718.0 418.1,706.2 423.4,700.9 435.3,699.6 447.1,700.9 462.2,708.2 477.2,718.0 535.2,718.0 540.0,706.2 544.7,700.9 557.4,699.6 570.0,700.9 576.1,708.2 582.2,718.0 617.5,718.0 621.5,706.2 625.4,700.9 632.8,699.6 640.2,700.9 650.0,708.2 659.7,718.0 692.4,718.0 697.2,706.2 701.9,700.9 718.5,699.6 735.2,700.9 740.2,708.2 745.2,718.0 770.5,718.0 774.5,706.2 778.4,700.9 793.4,699.6 808.5,700.9 818.2,708.2 828.0,718.0 872.8,718.0 875.5,706.2 878.1,700.9 886.5,699.6 895.0,700.9 903.4,708.2 911.9,718.0 956.7,718.0 958.8,706.2 960.9,700.9 974.9,699.6 988.9,700.9 1001.8,708.2 1014.7,718.0 1062.2,718.0 1066.7,706.2 1071.2,700.9 1079.1,699.6 1087.0,700.9" fill="none" stroke="#e020e0" stroke-width="1" shape-rendering="crispEdges"/>
<polyline points="32.0,708.8 348.5,708.8 359.1,707.5 612.2,707.5 622.8,708.8 1087.0,708.2" fill="none" stroke="#808020" stroke-width="1" shape-rendering="crispEdges"/>
<polyline points="32.0,715.4 1087.0,715.4" fill="none" stroke="#109090" stroke-width="1" shape-rendering="crispEdges"/>
<path d="M33 704 H1087" stroke="#10a010" stroke-width="2" stroke-dasharray="38 18 14 46 34 3 63 4 9 19 10 28" fill="none" shape-rendering="crispEdges"/>
<path d="M33 706 H1087" stroke="#0030b0" stroke-width="2" fill="none" shape-rendering="crispEdges"/>
<path d="M33 705.5 H1087" stroke="#fff" stroke-width="1" stroke-dasharray="0 392 12 108 14 88 16 124 12 400" fill="none" shape-rendering="crispEdges"/>
<rect x="31" y="554" width="2" height="165" fill="#000"/>
<rect x="31" y="717" width="1058" height="2" fill="#000"/>
<rect x="1088" y="554" width="1" height="165" fill="#000"/>
<rect x="32" y="554" width="1056" height="4" fill="#008000"/>
<text x="32.3" y="735.6" text-anchor="middle">0</text>
<text x="58.7" y="735.6" text-anchor="middle">5</text>
<text x="85.0" y="735.6" text-anchor="middle">10</text>
<text x="111.4" y="735.6" text-anchor="middle">15</text>
<text x="137.8" y="735.6" text-anchor="middle">20</text>
<text x="164.2" y="735.6" text-anchor="middle">25</text>
<text x="190.6" y="735.6" text-anchor="middle">30</text>
<text x="216.9" y="735.6" text-anchor="middle">35</text>
<text x="243.3" y="735.6" text-anchor="middle">40</text>
<text x="269.7" y="735.6" text-anchor="middle">45</text>
<text x="296.1" y="735.6" text-anchor="middle">50</text>
<text x="322.4" y="735.6" text-anchor="middle">55</text>
<text x="348.8" y="735.6" text-anchor="middle">60</text>
<text x="375.2" y="735.6" text-anchor="middle">65</text>
<text x="401.6" y="735.6" text-anchor="middle">70</text>
<text x="427.9" y="735.6" text-anchor="middle">75</text>
<text x="454.3" y="735.6" text-anchor="middle">80</text>
<text x="480.7" y="735.6" text-anchor="middle">85</text>
<text x="507.1" y="735.6" text-anchor="middle">90</text>
<text x="533.4" y="735.6" text-anchor="middle">95</text>
<text x="559.8" y="735.6" text-anchor="middle">100</text>
<text x="586.2" y="735.6" text-anchor="middle">105</text>
<text x="612.5" y="735.6" text-anchor="middle">110</text>
<text x="638.9" y="735.6" text-anchor="middle">115</text>
<text x="665.3" y="735.6" text-anchor="middle">120</text>
<text x="691.7" y="735.6" text-anchor="middle">125</text>
<text x="718.0" y="735.6" text-anchor="middle">130</text>
<text x="744.4" y="735.6" text-anchor="middle">135</text>
<text x="770.8" y="735.6" text-anchor="middle">140</text>
<text x="797.2" y="735.6" text-anchor="middle">145</text>
<text x="823.5" y="735.6" text-anchor="middle">150</text>
<text x="849.9" y="735.6" text-anchor="middle">155</text>
<text x="876.3" y="735.6" text-anchor="middle">160</text>
<text x="902.7" y="735.6" text-anchor="middle">165</text>
<text x="929.0" y="735.6" text-anchor="middle">170</text>
<text x="955.4" y="735.6" text-anchor="middle">175</text>
<text x="981.8" y="735.6" text-anchor="middle">180</text>
<text x="1008.2" y="735.6" text-anchor="middle">185</text>
<text x="1034.5" y="735.6" text-anchor="middle">190</text>
<text x="1060.9" y="735.6" text-anchor="middle">195</text>
<text x="1087.3" y="735.6" text-anchor="middle">200</text>
<text x="25" y="720.9" text-anchor="end">0</text>
<text x="25" y="704.6" text-anchor="end">0,5</text>
<text x="25" y="688.2" text-anchor="end">1</text>
<text x="25" y="671.9" text-anchor="end">1,5</text>
<text x="25" y="655.6" text-anchor="end">2</text>
<text x="25" y="639.2" text-anchor="end">2,5</text>
<text x="25" y="622.9" text-anchor="end">3</text>
<text x="25" y="606.6" text-anchor="end">3,5</text>
<text x="25" y="590.3" text-anchor="end">4</text>
<text x="25" y="573.9" text-anchor="end">4,5</text>
<text x="25" y="557.6" text-anchor="end">5</text>
<rect x="5" y="547" width="26" height="3" fill="#f2f0e6"/><rect x="5" y="550" width="26" height="1" fill="#fff"/>
</svg>
<div class="btn" style="left:44px;top:685px;width:22px;height:21px"></div>
<div class="btn" style="left:68px;top:685px;width:22px;height:21px"></div>
<div class="btn" style="left:92px;top:685px;width:22px;height:21px"></div>
<div class="btn" style="left:116px;top:685px;width:22px;height:21px"></div>
<div class="btn" style="left:140px;top:685px;width:22px;height:21px"></div>
<div class="btn" style="left:164px;top:685px;width:22px;height:21px"></div>
<svg class="abs" style="left:44px;top:685px" width="144" height="23" viewBox="44 685 144 23">
<polygon points="53,690 53,703 60,696.500" fill="#108080"/>
<rect x="75" y="692" width="9" height="9" fill="#000"/>
<circle cx="103.500" cy="696.500" r="5.500" fill="#ff0000"/>
<rect x="121" y="691" width="13" height="2.500" fill="#0000a0"/><polygon points="121,694.500 134,694.500 127.500,701.500" fill="#0000a0"/>
<polygon points="153.500,690 153.500,703 147,696.500" fill="#aca899"/>
<polygon points="173,690 173,703 180,696.500" fill="#aca899"/>
</svg>
<div style="position:absolute;left:2px;top:750px;width:139px;height:20px;box-sizing:border-box;border:1px solid;border-color:#aca899 #fff #fff #aca899;"></div>
<div style="position:absolute;left:143px;top:750px;width:350px;height:20px;box-sizing:border-box;border:1px solid;border-color:#aca899 #fff #fff #aca899;"></div>
<div style="position:absolute;left:495px;top:750px;width:618px;height:20px;box-sizing:border-box;border:1px solid;border-color:#aca899 #fff #fff #aca899;"></div>
<div class="t" style="top:749.86px;font-size:11px;color:#202020;line-height:20px;left:-80px;width:300px;text-align:center;">Połączony</div>
<div class="t" style="top:749.86px;font-size:11px;color:#202020;line-height:20px;letter-spacing:-0.1px;left:191px;">STAG-4 eco   wer. 10.0  8.0.1    2014-01-10 08:19:19</div>
<div class="abs" style="left:0;top:770px;width:1280px;height:30px;background:linear-gradient(to bottom,#1f2f86 0,#3165c4 3%,#3682e5 6%,#4490e6 10%,#3883e5 12%,#2b71e0 15%,#2663da 18%,#235bd6 20%,#2258d5 23%,#2157d6 38%,#245ddb 54%,#2562df 86%,#245fdc 89%,#2158d4 92%,#1d4ec0 95%,#1941a5 98%);"></div>
<div class="abs" style="left:0;top:770px;width:98px;height:30px;border-radius:0 12px 12px 0;background:linear-gradient(to bottom,#2f8a2f 0%,#5eb85e 8%,#3f9f3f 20%,#379637 50%,#2f8c2f 80%,#277a27 100%);box-shadow:inset -3px 0 6px rgba(20,70,20,.6), 2px 0 3px rgba(0,0,60,.5);"></div>
<svg class="abs" style="left:9px;top:775px" width="22" height="20" viewBox="0 0 22 20"><path d="M2 3 q4 -2.5 8 0 l-1.4 6 q-4 -2.5 -8 0 Z" fill="#e8572a"/><path d="M11.5 3.5 q4 2.5 8 0 l-1.4 6 q-4 2.5 -8 0 Z" fill="#7ac142"/><path d="M0.4 10.5 q4 -2.5 8 0 l-1.4 6 q-4 -2.5 -8 0 Z" fill="#3a80e8"/><path d="M9.9 11 q4 2.5 8 0 l-1.4 6 q-4 2.5 -8 0 Z" fill="#f6c522"/></svg>
<div class="t" style="top:775.25px;font-size:18px;color:#fff;line-height:20px;font-weight:bold;font-style:italic;left:35px;text-shadow:1px 1px 1px #1a4a1a;">Start</div>
<div style="position:absolute;left:108px;top:774px;width:159px;height:23px;border-radius:3px;background:#1e52b7;box-shadow:inset 1px 1px 2px #12368a;"></div>
<svg class="abs" style="left:119px;top:778px" width="16" height="16" viewBox="0 0 16 16"><rect width="16" height="16" fill="#fff"/><path d="M3.2 6.6 A5.6 5.6 0 0 1 13.8 6.2" fill="none" stroke="#404a68" stroke-width="1.1"/><path d="M2.4 9.2 A5.8 5.8 0 0 0 12.6 13.4" fill="none" stroke="#d03030" stroke-width="1.1"/><text x="1.6" y="10.4" font-family="Liberation Sans,sans-serif" font-size="9.5" font-weight="bold" fill="#d02020">A</text><text x="7.2" y="13.2" font-family="Liberation Sans,sans-serif" font-size="11.5" font-weight="bold" fill="#182858">c</text></svg>
<div class="t" style="top:775.86px;font-size:11px;color:#fff;line-height:20px;left:139px;transform:scaleX(.885);transform-origin:left center;">AC GAS SYNCHRO</div>
<div style="position:absolute;left:269px;top:774px;width:157px;height:23px;border-radius:3px;background:linear-gradient(to bottom,#5a9cf8 0%,#3c81f3 15%,#3a7eef 80%,#3070e0 100%);box-shadow:inset 1px 1px 1px #78aefc;"></div>
<svg class="abs" style="left:279px;top:776px" width="16" height="18" viewBox="0 0 16 18"><path d="M4 8 L12 8 L11 17 L5 17 Z" fill="#c8b070" stroke="#705020" stroke-width=".8"/><path d="M5 8 L3 1 M7 8 L7 0.5 M9 8 L10 1 M11 8 L13 2" stroke="#d03030" stroke-width="1.4"/><path d="M7 8 L7 0.5" stroke="#3060d0" stroke-width="1.4"/><path d="M9 8 L10 1" stroke="#30a030" stroke-width="1.4"/></svg>
<div class="t" style="top:775.86px;font-size:11px;color:#fff;line-height:20px;left:298px;">3 - Paint</div>
<div class="t" style="top:775.86px;font-size:11px;color:#fff;line-height:20px;left:1041px;">PL</div>
<svg class="abs" style="left:1063px;top:778px" width="16" height="14" viewBox="0 0 16 14"><rect x=".5" y="3.5" width="15" height="9" rx="1" fill="#e8e8e8" stroke="#303030"/><path d="M2 6 h12 M2 8 h12 M3 10.5 h10" stroke="#303030" stroke-width="1" stroke-dasharray="1.5 1"/><path d="M3 3 v-2 M6 3 v-2 M9 3 v-2 M12 3 v-2" stroke="#e8e8e8" stroke-width="1"/></svg>
<div class="abs" style="left:1097px;top:770px;width:183px;height:30px;background:linear-gradient(to bottom,#0c59b9 0%,#139ee9 6%,#18b5f2 10%,#139fe9 14%,#1290e8 19%,#0d8dea 63%,#0d9ff1 81%,#0f9eed 88%,#119be9 91%,#1392e2 94%,#137ed7 97%,#095bc9 100%);border-left:1px solid #092e51;box-shadow:inset 1px 0 1px #18bbff;"></div>
<div class="t" style="top:775.86px;font-size:11px;color:#fff;line-height:20px;left:1240px;">13:04</div>
<svg class="abs" style="left:1100px;top:774px" width="140" height="22" viewBox="1100 774 140 22">
<!-- wireless -->
<rect x="1108" y="778" width="9" height="7" fill="#3a4a78" stroke="#c8d0e0" stroke-width="1"/><rect x="1110" y="786" width="5" height="2" fill="#d8dce8"/><rect x="1108" y="788" width="9" height="2" fill="#e8ecf4"/>
<path d="M1118 779 q2 3 0 6 M1120.5 777.5 q3 4.5 0 9 M1123 776 q4 6 0 12" stroke="#e8f0ff" stroke-width="1.1" fill="none"/>
<!-- battery -->
<rect x="1130" y="778" width="9" height="14" rx="2.5" fill="#1020a0" stroke="#000a50" stroke-width="1"/><rect x="1131" y="779" width="7" height="6" rx="2" fill="#f0f0f8"/><circle cx="1134.5" cy="782" r="1.6" fill="#e01010"/>
<!-- network X -->
<rect x="1149" y="776" width="9" height="8" fill="#5868a0" stroke="#c0c8e0" stroke-width="1"/><rect x="1145" y="781" width="9" height="8" fill="#404a80" stroke="#c8d0e8" stroke-width="1"/><rect x="1146" y="786" width="7" height="3" fill="#c8c0e0"/>
<path d="M1153 785 l7 7 M1160 785 l-7 7" stroke="#e82020" stroke-width="2"/>
<!-- avg -->
<rect x="1163" y="779" width="7" height="6" fill="#f0c820"/><rect x="1163" y="785" width="7" height="6" fill="#50a830"/><rect x="1170" y="779" width="7" height="6" fill="#d04030"/><rect x="1170" y="785" width="7" height="6" fill="#e03020"/><rect x="1170" y="779" width="4" height="4" fill="#3070d0"/><path d="M1163 779 l2 -2 l1.5 2 l2 -2 l1.5 2" fill="#f0d030"/>
<!-- speaker -->
<path d="M1182 782 h3 l5 -4.500 v14 l-5 -4.500 h-3 Z" fill="#f08030" stroke="#301000" stroke-width=".8"/><path d="M1192 780 q2.500 4.500 0 9 M1194.500 778 q3.500 6.500 0 13" stroke="#101010" stroke-width="1.2" fill="none"/>
<!-- webcam -->
<circle cx="1204.500" cy="782.500" r="5.500" fill="#a8a8a8" stroke="#505860" stroke-width="1"/><circle cx="1203.500" cy="781.500" r="2.300" fill="#d86040"/><path d="M1207 789 l4 3 l2 -3" stroke="#c8d0e0" stroke-width="1.400" fill="none"/>
<!-- blue square -->
<rect x="1217.500" y="777.500" width="13" height="13" fill="#0a2a90" stroke="#e0e8ff" stroke-width="1.300"/><path d="M1224 780 v8 M1221 782 v4 M1227 782 v4" stroke="#60b0ff" stroke-width="1" stroke-dasharray="1 1"/><path d="M1217 777 l3 0 l-3 3 Z" fill="#e0e8ff"/>
</svg>
</body></html>
